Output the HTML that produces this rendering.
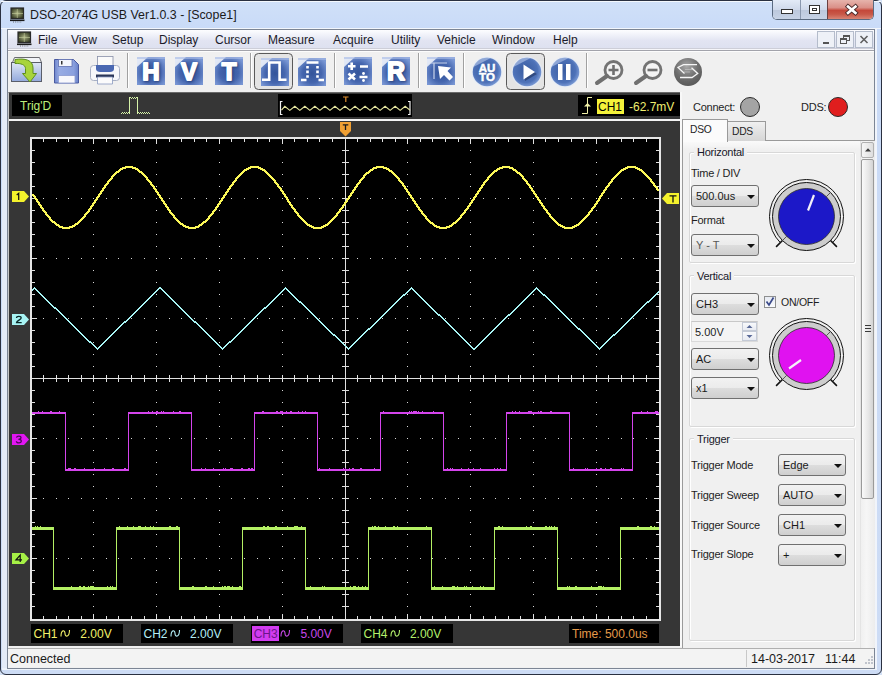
<!DOCTYPE html>
<html><head><meta charset="utf-8">
<style>
*{box-sizing:border-box;margin:0;padding:0}
html,body{width:882px;height:675px;overflow:hidden;background:#d4e1f5;font-family:"Liberation Sans",sans-serif;font-size:12px;color:#1e1e1e}
.a{position:absolute}
.t{position:absolute;white-space:pre;line-height:1}
.menu .t{top:34px;font-size:12px;color:#1b1b2a}
.ico{position:absolute;border-radius:2px;background:linear-gradient(135deg,#9fb4de 0%,#5b7dc0 35%,#3f63a8 70%,#2d4f92 100%);box-shadow:inset 0 0 3px rgba(255,255,255,.5)}
.ico b{position:absolute;left:0;right:0;text-align:center;color:#fff;font-weight:bold;font-family:"Liberation Sans",sans-serif;text-shadow:1px 1px 1px #1a2e5a}
.sep{position:absolute;top:54px;width:1px;height:34px;background:#a8a8a8;border-right:1px solid #fff}
.combo{position:absolute;height:22px;border:1px solid #707070;border-radius:3px;background:linear-gradient(#f2f2f2,#ebebeb 50%,#dddddd 51%,#cfcfcf);font-size:11px;color:#1a1a1a}
.combo span{position:absolute;left:4px;top:5px;white-space:pre;line-height:1}
.combo i{position:absolute;right:3px;top:9px;width:0;height:0;border-left:4px solid transparent;border-right:4px solid transparent;border-top:4.5px solid #111}
.lbl{position:absolute;white-space:pre;line-height:1;font-size:11px;color:#1e1e1e;letter-spacing:-0.25px}
.grp{position:absolute;border:1px solid #d8d8d8;border-radius:2px;box-shadow:1px 1px 0 #fff inset,1px 1px 0 #fff}
.chbox{position:absolute;top:624px;height:19px;background:#000;font-size:12px}
.chbox span{position:absolute;top:4px;white-space:pre;line-height:1}
</style></head><body>
<!-- outer window frame -->
<div class="a" style="left:0;top:0;width:882px;height:675px;border:1px solid #2a3040;border-radius:6px;background:linear-gradient(#d0e0f8,#c9dbf8 27px,#c9daf6 29px,#cddcf5)"></div><div class="a" style="left:2px;top:29px;width:5px;height:640px;background:#e4ebf7"></div><div class="a" style="left:875px;top:29px;width:2px;height:641px;background:#f0f4fb"></div><div class="a" style="left:2px;top:668px;width:875px;height:2px;background:#eef3fa"></div><div class="a" style="left:1px;top:28px;width:880px;height:1px;background:#f2f6fc"></div>
<div class="a" style="left:1px;top:1px;width:880px;height:1px;background:#f4f8fd"></div>
<!-- title -->
<svg class="a" style="left:10px;top:7px" width="16" height="16"><defs><radialGradient id="scr10" cx="0.5" cy="0.5" r="0.6"><stop offset="0" stop-color="#a8ae80"/><stop offset="1" stop-color="#30361e"/></radialGradient></defs><rect x="1" y="1" width="12.5" height="10.5" fill="url(#scr10)" stroke="#2a2a2a" stroke-width="1.2"/><path d="M7.3 2V11M2 6.5H13" stroke="#c8d0a0" stroke-width="0.8" opacity="0.7"/><rect x="0" y="12.5" width="14.5" height="1.6" fill="#1a1a1a"/><path d="M3 15H12" stroke="#555" stroke-width="0.8" stroke-dasharray="1 1.2"/></svg>
<div class="t" style="left:30px;top:9px;font-size:12.4px;color:#1a1a1a">DSO-2074G USB Ver1.0.3 - [Scope1]</div>
<!-- caption buttons -->
<div class="a" style="left:772px;top:0;width:102px;height:20px;border:1px solid #5a6a80;border-top:none;border-radius:0 0 5px 5px;overflow:hidden;background:#fff">
  <div class="a" style="left:0;top:0;width:27px;height:19px;background:linear-gradient(#e3ebf7,#cfd9ea 50%,#bcc8dc 51%,#c7d3e6)"></div>
  <div class="a" style="left:27px;top:0;width:1px;height:19px;background:#8a98ae"></div>
  <div class="a" style="left:28px;top:0;width:26px;height:19px;background:linear-gradient(#e3ebf7,#cfd9ea 50%,#bcc8dc 51%,#c7d3e6)"></div>
  <div class="a" style="left:54px;top:0;width:1px;height:19px;background:#6a4040"></div>
  <div class="a" style="left:55px;top:0;width:47px;height:19px;background:linear-gradient(#e6b4ac,#da9088 40%,#c4483a 55%,#c85848 75%,#d88474)"></div>
  <div class="a" style="left:8px;top:9px;width:12px;height:5px;border:1px solid #333;background:#fff"></div>
  <div class="a" style="left:36px;top:5px;width:11px;height:9px;border:1px solid #333;background:#fff"><div class="a" style="left:2px;top:2px;width:5px;height:3px;border:1px solid #333"></div></div>
  <svg class="a" style="left:70px;top:2px" width="18" height="16"><path d="M5 4.5L12.5 11M12.5 4.5L5 11" stroke="#4a2a2a" stroke-width="4.4" stroke-linecap="square"/><path d="M5 4.5L12.5 11M12.5 4.5L5 11" stroke="#fff" stroke-width="2.6" stroke-linecap="square"/></svg>
</div>
<!-- MDI child frame -->
<div class="a" style="left:7px;top:29px;width:868px;height:640px;background:#f0f0f0;border:1px solid #7c8594"></div>
<!-- menu bar -->
<div class="a" style="left:8px;top:48px;width:866px;height:4px;background:linear-gradient(#cdced8 0 1px,#f6f6fa 1px 2px,#a2a3ab 2px 3px,#fcfcfc 3px 4px)"></div><div class="a menu" style="left:8px;top:30px;width:866px;height:18px;background:linear-gradient(#fdfdff,#f4f5fb 20%,#e2e4f2 60%,#dee1f0)">
</div>
<div class="menu">
<svg class="a" style="left:17px;top:31px" width="16" height="16"><defs><radialGradient id="scr17" cx="0.5" cy="0.5" r="0.6"><stop offset="0" stop-color="#a8ae80"/><stop offset="1" stop-color="#30361e"/></radialGradient></defs><rect x="1" y="1" width="12.5" height="10.5" fill="url(#scr17)" stroke="#2a2a2a" stroke-width="1.2"/><path d="M7.3 2V11M2 6.5H13" stroke="#c8d0a0" stroke-width="0.8" opacity="0.7"/><rect x="0" y="12.5" width="14.5" height="1.6" fill="#1a1a1a"/><path d="M3 15H12" stroke="#555" stroke-width="0.8" stroke-dasharray="1 1.2"/></svg>
<div class="t" style="left:38px">File</div>
<div class="t" style="left:71px">View</div>
<div class="t" style="left:112px">Setup</div>
<div class="t" style="left:159px">Display</div>
<div class="t" style="left:215px">Cursor</div>
<div class="t" style="left:268px">Measure</div>
<div class="t" style="left:333px">Acquire</div>
<div class="t" style="left:391px">Utility</div>
<div class="t" style="left:437px">Vehicle</div>
<div class="t" style="left:492px">Window</div>
<div class="t" style="left:553px">Help</div>
</div>
<!-- MDI buttons -->
<div class="a" style="left:817px;top:31px;width:18px;height:17px;border:1px solid #b4bccb;background:#eef1f7"><div class="a" style="left:5px;top:10px;width:6px;height:2px;background:#555"></div></div>
<div class="a" style="left:836px;top:31px;width:18px;height:17px;border:1px solid #b4bccb;background:#eef1f7"><div class="a" style="left:6px;top:3px;width:7px;height:6px;border:1px solid #555;border-top-width:2px"></div><div class="a" style="left:3px;top:6px;width:7px;height:6px;border:1px solid #555;border-top-width:2px;background:#eef1f7"></div></div>
<div class="a" style="left:855px;top:31px;width:18px;height:17px;border:1px solid #b4bccb;background:#eef1f7"><svg class="a" style="left:0;top:0" width="16" height="15"><path d="M4.5 4L11.5 11M11.5 4L4.5 11" stroke="#606060" stroke-width="1.6"/></svg></div>
<!-- toolbar -->
<div class="a" style="left:8px;top:52px;width:866px;height:40px;background:#f0f0f0"></div>
<!-- toolbar icons -->
<svg class="a" style="left:0;top:50px" width="720" height="42">
<defs>
<radialGradient id="bg1" cx="0.5" cy="0.55" r="0.62"><stop offset="0" stop-color="#34559a"/><stop offset="0.55" stop-color="#4566ae"/><stop offset="1" stop-color="#7896d4"/></radialGradient><filter id="soft" x="-10%" y="-10%" width="120%" height="120%"><feGaussianBlur stdDeviation="0.55"/></filter>
<radialGradient id="rg1" cx="0.45" cy="0.45" r="0.6"><stop offset="0" stop-color="#3a5ca0"/><stop offset="0.7" stop-color="#4e72b8"/><stop offset="1" stop-color="#86a4dc"/></radialGradient>
<linearGradient id="fold" x1="0" y1="0" x2="0" y2="1"><stop offset="0" stop-color="#dfe7f6"/><stop offset="1" stop-color="#93a9dc"/></linearGradient>
<filter id="blr" x="-20%" y="-20%" width="140%" height="140%"><feGaussianBlur stdDeviation="0.8"/></filter>
</defs>
<!-- folder -->
<path d="M12.5 12.5L14.5 7.5H39.5L41.5 12.5" fill="#f2f4f8" stroke="#6a6a70" stroke-width="1"/>
<rect x="11.5" y="12.5" width="30" height="19" fill="url(#fold)" stroke="#5a5e6a" stroke-width="1"/>
<path d="M15 9.5C25 8 33 10 33 18V23.5H36.5L30 32L22.5 23.5H25.5V18.5C25.5 15 21 13 15 13.5Z" fill="#a8d43c" stroke="#5f8f1e" stroke-width="1"/>
<!-- floppy -->
<linearGradient id="flp" x1="0" y1="0" x2="1" y2="0"><stop offset="0" stop-color="#6f86cc"/><stop offset="0.2" stop-color="#98ace4"/><stop offset="0.8" stop-color="#8aa0de"/><stop offset="1" stop-color="#6a82c8"/></linearGradient><path d="M54.5 9.5H73.5L78.5 14.5V33H54.5Z" fill="url(#flp)" stroke="#4a5aa0" stroke-width="1"/>
<rect x="58.5" y="9.5" width="13.5" height="7" fill="#f4f6fc" stroke="#6070b0" stroke-width="0.8"/>
<rect x="61" y="11" width="1.5" height="3.5" fill="#333"/>
<rect x="58.5" y="25.5" width="16.5" height="7.5" fill="#f8f8fc" stroke="#8a9ad0" stroke-width="0.8"/>
<!-- printer -->
<rect x="97.5" y="6.5" width="15.5" height="9" fill="#fafafa" stroke="#8890a8" stroke-width="0.8"/>
<rect x="90.5" y="15.5" width="29" height="15" rx="3" fill="#f6f7fa" stroke="#a8b0c4" stroke-width="1"/>
<path d="M96 15H114V19C114 21 112 22 110 22H100C98 22 96 21 96 19Z" fill="#4a68b2"/>
<rect x="96" y="24.5" width="18" height="3" fill="#2a3658"/>
<path d="M97.5 27H112.5V34H97.5Z" fill="#fbfbfc" stroke="#8a9ac0" stroke-width="0.8"/>
<g filter="url(#soft)"><rect x="137" y="7" width="28" height="28" fill="url(#bg1)"/><path d="M137 7H148L137 17Z" fill="#f4f7fc" opacity="0.85"/><rect x="137" y="7" width="28" height="2" fill="#aabde6" opacity="0.6"/></g><text x="152" y="31" font-family="Liberation Sans" font-weight="bold" font-size="24" text-anchor="middle" fill="#1a2c5a" stroke="#1a2c5a" stroke-width="1.8" opacity="0.6" filter="url(#blr)">H</text><text x="151" y="30" font-family="Liberation Sans" font-weight="bold" font-size="24" text-anchor="middle" fill="#fff" stroke="#fff" stroke-width="1.8" stroke-linejoin="round">H</text><g filter="url(#soft)"><rect x="175" y="7" width="28" height="28" fill="url(#bg1)"/><path d="M175 7H186L175 17Z" fill="#f4f7fc" opacity="0.85"/><rect x="175" y="7" width="28" height="2" fill="#aabde6" opacity="0.6"/></g><text x="190" y="31" font-family="Liberation Sans" font-weight="bold" font-size="24" text-anchor="middle" fill="#1a2c5a" stroke="#1a2c5a" stroke-width="1.8" opacity="0.6" filter="url(#blr)">V</text><text x="189" y="30" font-family="Liberation Sans" font-weight="bold" font-size="24" text-anchor="middle" fill="#fff" stroke="#fff" stroke-width="1.8" stroke-linejoin="round">V</text><g filter="url(#soft)"><rect x="215" y="7" width="28" height="28" fill="url(#bg1)"/><path d="M215 7H226L215 17Z" fill="#f4f7fc" opacity="0.85"/><rect x="215" y="7" width="28" height="2" fill="#aabde6" opacity="0.6"/></g><text x="230" y="31" font-family="Liberation Sans" font-weight="bold" font-size="24" text-anchor="middle" fill="#1a2c5a" stroke="#1a2c5a" stroke-width="1.8" opacity="0.6" filter="url(#blr)">T</text><text x="229" y="30" font-family="Liberation Sans" font-weight="bold" font-size="24" text-anchor="middle" fill="#fff" stroke="#fff" stroke-width="1.8" stroke-linejoin="round">T</text><g filter="url(#soft)"><rect x="382" y="7" width="28" height="28" fill="url(#bg1)"/><path d="M382 7H393L382 17Z" fill="#f4f7fc" opacity="0.85"/><rect x="382" y="7" width="28" height="2" fill="#aabde6" opacity="0.6"/></g><text x="397" y="31" font-family="Liberation Sans" font-weight="bold" font-size="25" text-anchor="middle" fill="#1a2c5a" stroke="#1a2c5a" stroke-width="1.8" opacity="0.6" filter="url(#blr)">R</text><text x="396" y="30" font-family="Liberation Sans" font-weight="bold" font-size="25" text-anchor="middle" fill="#fff" stroke="#fff" stroke-width="1.8" stroke-linejoin="round">R</text><!-- pressed frame 1 -->
<rect x="254.5" y="3.5" width="38" height="36" rx="4" fill="#e4e4e4" stroke="#5a5a5a" stroke-width="1"/>
<g filter="url(#soft)"><rect x="261" y="8" width="28" height="28" fill="url(#bg1)"/><path d="M261 8H272L261 18Z" fill="#f4f7fc" opacity="0.85"/><rect x="261" y="8" width="28" height="2" fill="#aabde6" opacity="0.6"/></g><path d="M262 29.8H269.2V12.5H279.6V29.8H286.5" stroke="#fff" stroke-width="2.6" fill="none"/><g filter="url(#soft)"><rect x="298" y="8" width="28" height="28" fill="url(#bg1)"/><path d="M298 8H309L298 18Z" fill="#f4f7fc" opacity="0.85"/><rect x="298" y="8" width="28" height="2" fill="#aabde6" opacity="0.6"/></g><path d="M301 30H306.5M318.5 30H324M306.5 12.5H318.5" stroke="#fff" stroke-width="2.6" fill="none"/><path d="M307.5 16V29M317.5 16V29" stroke="#fff" stroke-width="2.6" stroke-dasharray="2.6 2" fill="none"/><g filter="url(#soft)"><rect x="344" y="7" width="28" height="28" fill="url(#bg1)"/><path d="M344 7H355L344 17Z" fill="#f4f7fc" opacity="0.85"/><rect x="344" y="7" width="28" height="2" fill="#aabde6" opacity="0.6"/></g><path d="M348 16.3H355.5M351.7 12.5V20M360 16.5H368M348.5 23.5L355 29.5M355 23.5L348.5 29.5M359.5 27H367.5" stroke="#fff" stroke-width="2.6" fill="none"/><circle cx="363.5" cy="23.5" r="1.4" fill="#fff"/><circle cx="363.5" cy="30.5" r="1.4" fill="#fff"/><g filter="url(#soft)"><rect x="427" y="7" width="28" height="28" fill="url(#bg1)"/><path d="M427 7H438L427 17Z" fill="#f4f7fc" opacity="0.85"/><rect x="427" y="7" width="28" height="2" fill="#aabde6" opacity="0.6"/></g><path d="M431 13H447M434 13V29" stroke="#c8d4ec" stroke-width="1.2" fill="none"/><path d="M438 16L451 17.5L447.5 21L453 27L449.5 30.5L444 25L440 29Z" fill="#fff"/><rect x="127" y="3" width="1" height="35" fill="#a0a0a0"/><rect x="128" y="3" width="1" height="35" fill="#fff"/><rect x="250" y="3" width="1" height="35" fill="#a0a0a0"/><rect x="251" y="3" width="1" height="35" fill="#fff"/><rect x="334" y="3" width="1" height="35" fill="#a0a0a0"/><rect x="335" y="3" width="1" height="35" fill="#fff"/><rect x="418" y="3" width="1" height="35" fill="#a0a0a0"/><rect x="419" y="3" width="1" height="35" fill="#fff"/><rect x="463" y="3" width="1" height="35" fill="#a0a0a0"/><rect x="464" y="3" width="1" height="35" fill="#fff"/><rect x="586" y="3" width="1" height="35" fill="#a0a0a0"/><rect x="587" y="3" width="1" height="35" fill="#fff"/><rect x="506.5" y="3.5" width="38" height="36" rx="4" fill="#e4e4e4" stroke="#5a5a5a" stroke-width="1"/><circle cx="487" cy="22" r="15.5" fill="#e4ecf8" opacity="0.7" filter="url(#soft)"/><circle cx="487" cy="22" r="14.3" fill="url(#rg1)"/><path d="M473.37 17.04A14.5 14.5 0 0 1 490.75 7.99Z" fill="#c4d4f0" opacity="0.55"/><circle cx="527" cy="22" r="15.5" fill="#e4ecf8" opacity="0.7" filter="url(#soft)"/><circle cx="527" cy="22" r="14.3" fill="url(#rg1)"/><path d="M513.37 17.04A14.5 14.5 0 0 1 530.75 7.99Z" fill="#c4d4f0" opacity="0.55"/><circle cx="565" cy="22" r="15.5" fill="#e4ecf8" opacity="0.7" filter="url(#soft)"/><circle cx="565" cy="22" r="14.3" fill="url(#rg1)"/><path d="M551.37 17.04A14.5 14.5 0 0 1 568.75 7.99Z" fill="#c4d4f0" opacity="0.55"/><text x="487" y="21.5" font-family="Liberation Sans" font-weight="bold" font-size="11.5" text-anchor="middle" fill="#fff" stroke="#fff" stroke-width="0.5">AU</text><text x="487" y="31" font-family="Liberation Sans" font-weight="bold" font-size="11.5" text-anchor="middle" fill="#fff" stroke="#fff" stroke-width="0.5">TO</text><path d="M525 16.5L537 24L525 31Z" fill="#1a2a50" opacity="0.5" filter="url(#soft)"/><path d="M523.5 14.5L535 22L523.5 29.5Z" fill="#fff"/><rect x="558" y="14" width="4.5" height="16" fill="#fff"/><rect x="566" y="14" width="4.5" height="16" fill="#fff"/><circle cx="613.5" cy="20" r="8.5" stroke="#747474" stroke-width="2.8" fill="#f4f4f4"/>
<path d="M607 26L597 33" stroke="#707070" stroke-width="4" stroke-linecap="round"/>
<path d="M613.5 15V25M608.5 20H618.5" stroke="#707070" stroke-width="2.6"/>
<circle cx="652.5" cy="20" r="8.5" stroke="#747474" stroke-width="2.8" fill="#f4f4f4"/>
<path d="M646 26L636 33" stroke="#707070" stroke-width="4" stroke-linecap="round"/>
<path d="M647.5 20H657.5" stroke="#707070" stroke-width="2.6"/>
<defs><radialGradient id="gr2" cx="0.45" cy="0.3" r="0.75"><stop offset="0" stop-color="#a8a8a8"/><stop offset="0.55" stop-color="#6e6e6e"/><stop offset="1" stop-color="#555"/></radialGradient></defs>
<circle cx="688" cy="22" r="14" fill="url(#gr2)" filter="url(#soft)"/>
<path d="M697 14.7H683.5L678 17.5L684.5 23.5M680 27.5H692L697.7 23.5L691.5 17.8" stroke="#f6f6f6" stroke-width="1.3" fill="none"/><path d="M685 19.5H693M684 22H690" stroke="#dcdcdc" stroke-width="0.8" fill="none" opacity="0.6"/>
</svg>
<!-- scope surround -->
<div class="a" style="left:8px;top:92px;width:673px;height:554px;background:#363636;border-left:1px solid #c4c4c4;border-top:1px solid #6a6a6a"></div>
<div class="a" style="left:9px;top:119px;width:672px;height:2px;background:#f4f4f4"></div>
<!-- trig bar -->
<div class="a" style="left:12px;top:95px;width:50px;height:21px;background:#000"></div>
<div class="t" style="left:20px;top:100px;color:#bef07c">Trig'D</div>
<svg class="a" style="left:0;top:0" width="200" height="130"><path d="M121 113h1v1h-1zM122 112h1v1h-1zM123 113h1v1h-1zM124 112h1v1h-1zM125 113h1v1h-1zM126 112h1v1h-1zM127 113h1v1h-1zM128 112h1v1h-1zM130 97h1v1h-1zM131 98h1v1h-1zM132 97h1v1h-1zM133 98h1v1h-1zM134 97h1v1h-1zM135 98h1v1h-1zM136 97h1v1h-1zM138 112h1v1h-1zM139 113h1v1h-1zM140 112h1v1h-1zM141 113h1v1h-1zM142 112h1v1h-1zM143 113h1v1h-1zM144 112h1v1h-1zM145 113h1v1h-1zM146 112h1v1h-1zM147 113h1v1h-1zM148 112h1v1h-1zM149 113h1v1h-1zM129 97h1v17h-1zM137 97h1v17h-1z" fill="#d6f2a8"/></svg>
<div class="a" style="left:278px;top:94px;width:134px;height:23px;background:#000"></div>
<svg class="a" style="left:0;top:0" width="882" height="130"><path d="M282.5 101.5H280.5V114.5H282.5M408 101.5H410V114.5H408" stroke="#f0f0f0" stroke-width="1.2" fill="none"/><path d="M281.5 110.2L284.80 106.3L289.81 110.4L294.83 106.3L299.84 110.4L304.86 106.3L309.88 110.4L314.89 106.3L319.90 110.4L324.92 106.3L329.94 110.4L334.95 106.3L339.96 110.4L344.98 106.3L350.00 110.4L355.01 106.3L360.02 110.4L365.04 106.3L370.06 110.4L375.07 106.3L380.08 110.4L385.10 106.3L390.12 110.4L395.13 106.3L400.14 110.4L405.16 106.3L410.17 110.4" stroke="#e6e6a0" stroke-width="1.1" fill="none"/><path d="M343 97H348.5M345.8 97V102" stroke="#e09030" stroke-width="1.2"/></svg>
<div class="a" style="left:578px;top:95px;width:102px;height:21px;background:#000"></div>
<svg class="a" style="left:0;top:0" width="700" height="130"><path d="M582 113.5H587.5V97.5H592" stroke="#f2f2a8" stroke-width="1" fill="none"/><path d="M587.5 103L584 106.5H591Z" fill="#f2f2a8"/></svg>
<div class="a" style="left:597px;top:99px;width:27px;height:15px;background:#f4f23a"></div>
<div class="t" style="left:598px;top:101px;color:#000">CH1</div>
<div class="t" style="left:629px;top:101px;color:#f0ee70">-62.7mV</div>
<svg width="882" height="675" style="position:absolute;left:0;top:0"><rect x="30" y="137" width="631" height="484" fill="#e6e6e6"/><rect x="32" y="139" width="627" height="480" fill="#000"/><path d="M93 150h1v1h-1zM93 162h1v1h-1zM93 174h1v1h-1zM93 186h1v1h-1zM93 198h1v1h-1zM93 210h1v1h-1zM93 222h1v1h-1zM93 234h1v1h-1zM93 246h1v1h-1zM93 258h1v1h-1zM93 270h1v1h-1zM93 282h1v1h-1zM93 294h1v1h-1zM93 306h1v1h-1zM93 318h1v1h-1zM93 330h1v1h-1zM93 342h1v1h-1zM93 354h1v1h-1zM93 366h1v1h-1zM93 390h1v1h-1zM93 402h1v1h-1zM93 414h1v1h-1zM93 426h1v1h-1zM93 438h1v1h-1zM93 450h1v1h-1zM93 462h1v1h-1zM93 474h1v1h-1zM93 486h1v1h-1zM93 498h1v1h-1zM93 510h1v1h-1zM93 522h1v1h-1zM93 534h1v1h-1zM93 546h1v1h-1zM93 558h1v1h-1zM93 570h1v1h-1zM93 582h1v1h-1zM93 594h1v1h-1zM93 606h1v1h-1zM156 150h1v1h-1zM156 162h1v1h-1zM156 174h1v1h-1zM156 186h1v1h-1zM156 198h1v1h-1zM156 210h1v1h-1zM156 222h1v1h-1zM156 234h1v1h-1zM156 246h1v1h-1zM156 258h1v1h-1zM156 270h1v1h-1zM156 282h1v1h-1zM156 294h1v1h-1zM156 306h1v1h-1zM156 318h1v1h-1zM156 330h1v1h-1zM156 342h1v1h-1zM156 354h1v1h-1zM156 366h1v1h-1zM156 390h1v1h-1zM156 402h1v1h-1zM156 414h1v1h-1zM156 426h1v1h-1zM156 438h1v1h-1zM156 450h1v1h-1zM156 462h1v1h-1zM156 474h1v1h-1zM156 486h1v1h-1zM156 498h1v1h-1zM156 510h1v1h-1zM156 522h1v1h-1zM156 534h1v1h-1zM156 546h1v1h-1zM156 558h1v1h-1zM156 570h1v1h-1zM156 582h1v1h-1zM156 594h1v1h-1zM156 606h1v1h-1zM219 150h1v1h-1zM219 162h1v1h-1zM219 174h1v1h-1zM219 186h1v1h-1zM219 198h1v1h-1zM219 210h1v1h-1zM219 222h1v1h-1zM219 234h1v1h-1zM219 246h1v1h-1zM219 258h1v1h-1zM219 270h1v1h-1zM219 282h1v1h-1zM219 294h1v1h-1zM219 306h1v1h-1zM219 318h1v1h-1zM219 330h1v1h-1zM219 342h1v1h-1zM219 354h1v1h-1zM219 366h1v1h-1zM219 390h1v1h-1zM219 402h1v1h-1zM219 414h1v1h-1zM219 426h1v1h-1zM219 438h1v1h-1zM219 450h1v1h-1zM219 462h1v1h-1zM219 474h1v1h-1zM219 486h1v1h-1zM219 498h1v1h-1zM219 510h1v1h-1zM219 522h1v1h-1zM219 534h1v1h-1zM219 546h1v1h-1zM219 558h1v1h-1zM219 570h1v1h-1zM219 582h1v1h-1zM219 594h1v1h-1zM219 606h1v1h-1zM282 150h1v1h-1zM282 162h1v1h-1zM282 174h1v1h-1zM282 186h1v1h-1zM282 198h1v1h-1zM282 210h1v1h-1zM282 222h1v1h-1zM282 234h1v1h-1zM282 246h1v1h-1zM282 258h1v1h-1zM282 270h1v1h-1zM282 282h1v1h-1zM282 294h1v1h-1zM282 306h1v1h-1zM282 318h1v1h-1zM282 330h1v1h-1zM282 342h1v1h-1zM282 354h1v1h-1zM282 366h1v1h-1zM282 390h1v1h-1zM282 402h1v1h-1zM282 414h1v1h-1zM282 426h1v1h-1zM282 438h1v1h-1zM282 450h1v1h-1zM282 462h1v1h-1zM282 474h1v1h-1zM282 486h1v1h-1zM282 498h1v1h-1zM282 510h1v1h-1zM282 522h1v1h-1zM282 534h1v1h-1zM282 546h1v1h-1zM282 558h1v1h-1zM282 570h1v1h-1zM282 582h1v1h-1zM282 594h1v1h-1zM282 606h1v1h-1zM407 150h1v1h-1zM407 162h1v1h-1zM407 174h1v1h-1zM407 186h1v1h-1zM407 198h1v1h-1zM407 210h1v1h-1zM407 222h1v1h-1zM407 234h1v1h-1zM407 246h1v1h-1zM407 258h1v1h-1zM407 270h1v1h-1zM407 282h1v1h-1zM407 294h1v1h-1zM407 306h1v1h-1zM407 318h1v1h-1zM407 330h1v1h-1zM407 342h1v1h-1zM407 354h1v1h-1zM407 366h1v1h-1zM407 390h1v1h-1zM407 402h1v1h-1zM407 414h1v1h-1zM407 426h1v1h-1zM407 438h1v1h-1zM407 450h1v1h-1zM407 462h1v1h-1zM407 474h1v1h-1zM407 486h1v1h-1zM407 498h1v1h-1zM407 510h1v1h-1zM407 522h1v1h-1zM407 534h1v1h-1zM407 546h1v1h-1zM407 558h1v1h-1zM407 570h1v1h-1zM407 582h1v1h-1zM407 594h1v1h-1zM407 606h1v1h-1zM470 150h1v1h-1zM470 162h1v1h-1zM470 174h1v1h-1zM470 186h1v1h-1zM470 198h1v1h-1zM470 210h1v1h-1zM470 222h1v1h-1zM470 234h1v1h-1zM470 246h1v1h-1zM470 258h1v1h-1zM470 270h1v1h-1zM470 282h1v1h-1zM470 294h1v1h-1zM470 306h1v1h-1zM470 318h1v1h-1zM470 330h1v1h-1zM470 342h1v1h-1zM470 354h1v1h-1zM470 366h1v1h-1zM470 390h1v1h-1zM470 402h1v1h-1zM470 414h1v1h-1zM470 426h1v1h-1zM470 438h1v1h-1zM470 450h1v1h-1zM470 462h1v1h-1zM470 474h1v1h-1zM470 486h1v1h-1zM470 498h1v1h-1zM470 510h1v1h-1zM470 522h1v1h-1zM470 534h1v1h-1zM470 546h1v1h-1zM470 558h1v1h-1zM470 570h1v1h-1zM470 582h1v1h-1zM470 594h1v1h-1zM470 606h1v1h-1zM533 150h1v1h-1zM533 162h1v1h-1zM533 174h1v1h-1zM533 186h1v1h-1zM533 198h1v1h-1zM533 210h1v1h-1zM533 222h1v1h-1zM533 234h1v1h-1zM533 246h1v1h-1zM533 258h1v1h-1zM533 270h1v1h-1zM533 282h1v1h-1zM533 294h1v1h-1zM533 306h1v1h-1zM533 318h1v1h-1zM533 330h1v1h-1zM533 342h1v1h-1zM533 354h1v1h-1zM533 366h1v1h-1zM533 390h1v1h-1zM533 402h1v1h-1zM533 414h1v1h-1zM533 426h1v1h-1zM533 438h1v1h-1zM533 450h1v1h-1zM533 462h1v1h-1zM533 474h1v1h-1zM533 486h1v1h-1zM533 498h1v1h-1zM533 510h1v1h-1zM533 522h1v1h-1zM533 534h1v1h-1zM533 546h1v1h-1zM533 558h1v1h-1zM533 570h1v1h-1zM533 582h1v1h-1zM533 594h1v1h-1zM533 606h1v1h-1zM596 150h1v1h-1zM596 162h1v1h-1zM596 174h1v1h-1zM596 186h1v1h-1zM596 198h1v1h-1zM596 210h1v1h-1zM596 222h1v1h-1zM596 234h1v1h-1zM596 246h1v1h-1zM596 258h1v1h-1zM596 270h1v1h-1zM596 282h1v1h-1zM596 294h1v1h-1zM596 306h1v1h-1zM596 318h1v1h-1zM596 330h1v1h-1zM596 342h1v1h-1zM596 354h1v1h-1zM596 366h1v1h-1zM596 390h1v1h-1zM596 402h1v1h-1zM596 414h1v1h-1zM596 426h1v1h-1zM596 438h1v1h-1zM596 450h1v1h-1zM596 462h1v1h-1zM596 474h1v1h-1zM596 486h1v1h-1zM596 498h1v1h-1zM596 510h1v1h-1zM596 522h1v1h-1zM596 534h1v1h-1zM596 546h1v1h-1zM596 558h1v1h-1zM596 570h1v1h-1zM596 582h1v1h-1zM596 594h1v1h-1zM596 606h1v1h-1zM43 198h1v1h-1zM56 198h1v1h-1zM68 198h1v1h-1zM81 198h1v1h-1zM93 198h1v1h-1zM106 198h1v1h-1zM118 198h1v1h-1zM131 198h1v1h-1zM144 198h1v1h-1zM156 198h1v1h-1zM169 198h1v1h-1zM181 198h1v1h-1zM194 198h1v1h-1zM206 198h1v1h-1zM219 198h1v1h-1zM231 198h1v1h-1zM244 198h1v1h-1zM257 198h1v1h-1zM269 198h1v1h-1zM282 198h1v1h-1zM294 198h1v1h-1zM307 198h1v1h-1zM319 198h1v1h-1zM332 198h1v1h-1zM357 198h1v1h-1zM370 198h1v1h-1zM382 198h1v1h-1zM395 198h1v1h-1zM407 198h1v1h-1zM420 198h1v1h-1zM432 198h1v1h-1zM445 198h1v1h-1zM458 198h1v1h-1zM470 198h1v1h-1zM483 198h1v1h-1zM495 198h1v1h-1zM508 198h1v1h-1zM520 198h1v1h-1zM533 198h1v1h-1zM545 198h1v1h-1zM558 198h1v1h-1zM571 198h1v1h-1zM583 198h1v1h-1zM596 198h1v1h-1zM608 198h1v1h-1zM621 198h1v1h-1zM633 198h1v1h-1zM646 198h1v1h-1zM43 258h1v1h-1zM56 258h1v1h-1zM68 258h1v1h-1zM81 258h1v1h-1zM93 258h1v1h-1zM106 258h1v1h-1zM118 258h1v1h-1zM131 258h1v1h-1zM144 258h1v1h-1zM156 258h1v1h-1zM169 258h1v1h-1zM181 258h1v1h-1zM194 258h1v1h-1zM206 258h1v1h-1zM219 258h1v1h-1zM231 258h1v1h-1zM244 258h1v1h-1zM257 258h1v1h-1zM269 258h1v1h-1zM282 258h1v1h-1zM294 258h1v1h-1zM307 258h1v1h-1zM319 258h1v1h-1zM332 258h1v1h-1zM357 258h1v1h-1zM370 258h1v1h-1zM382 258h1v1h-1zM395 258h1v1h-1zM407 258h1v1h-1zM420 258h1v1h-1zM432 258h1v1h-1zM445 258h1v1h-1zM458 258h1v1h-1zM470 258h1v1h-1zM483 258h1v1h-1zM495 258h1v1h-1zM508 258h1v1h-1zM520 258h1v1h-1zM533 258h1v1h-1zM545 258h1v1h-1zM558 258h1v1h-1zM571 258h1v1h-1zM583 258h1v1h-1zM596 258h1v1h-1zM608 258h1v1h-1zM621 258h1v1h-1zM633 258h1v1h-1zM646 258h1v1h-1zM43 318h1v1h-1zM56 318h1v1h-1zM68 318h1v1h-1zM81 318h1v1h-1zM93 318h1v1h-1zM106 318h1v1h-1zM118 318h1v1h-1zM131 318h1v1h-1zM144 318h1v1h-1zM156 318h1v1h-1zM169 318h1v1h-1zM181 318h1v1h-1zM194 318h1v1h-1zM206 318h1v1h-1zM219 318h1v1h-1zM231 318h1v1h-1zM244 318h1v1h-1zM257 318h1v1h-1zM269 318h1v1h-1zM282 318h1v1h-1zM294 318h1v1h-1zM307 318h1v1h-1zM319 318h1v1h-1zM332 318h1v1h-1zM357 318h1v1h-1zM370 318h1v1h-1zM382 318h1v1h-1zM395 318h1v1h-1zM407 318h1v1h-1zM420 318h1v1h-1zM432 318h1v1h-1zM445 318h1v1h-1zM458 318h1v1h-1zM470 318h1v1h-1zM483 318h1v1h-1zM495 318h1v1h-1zM508 318h1v1h-1zM520 318h1v1h-1zM533 318h1v1h-1zM545 318h1v1h-1zM558 318h1v1h-1zM571 318h1v1h-1zM583 318h1v1h-1zM596 318h1v1h-1zM608 318h1v1h-1zM621 318h1v1h-1zM633 318h1v1h-1zM646 318h1v1h-1zM43 438h1v1h-1zM56 438h1v1h-1zM68 438h1v1h-1zM81 438h1v1h-1zM93 438h1v1h-1zM106 438h1v1h-1zM118 438h1v1h-1zM131 438h1v1h-1zM144 438h1v1h-1zM156 438h1v1h-1zM169 438h1v1h-1zM181 438h1v1h-1zM194 438h1v1h-1zM206 438h1v1h-1zM219 438h1v1h-1zM231 438h1v1h-1zM244 438h1v1h-1zM257 438h1v1h-1zM269 438h1v1h-1zM282 438h1v1h-1zM294 438h1v1h-1zM307 438h1v1h-1zM319 438h1v1h-1zM332 438h1v1h-1zM357 438h1v1h-1zM370 438h1v1h-1zM382 438h1v1h-1zM395 438h1v1h-1zM407 438h1v1h-1zM420 438h1v1h-1zM432 438h1v1h-1zM445 438h1v1h-1zM458 438h1v1h-1zM470 438h1v1h-1zM483 438h1v1h-1zM495 438h1v1h-1zM508 438h1v1h-1zM520 438h1v1h-1zM533 438h1v1h-1zM545 438h1v1h-1zM558 438h1v1h-1zM571 438h1v1h-1zM583 438h1v1h-1zM596 438h1v1h-1zM608 438h1v1h-1zM621 438h1v1h-1zM633 438h1v1h-1zM646 438h1v1h-1zM43 498h1v1h-1zM56 498h1v1h-1zM68 498h1v1h-1zM81 498h1v1h-1zM93 498h1v1h-1zM106 498h1v1h-1zM118 498h1v1h-1zM131 498h1v1h-1zM144 498h1v1h-1zM156 498h1v1h-1zM169 498h1v1h-1zM181 498h1v1h-1zM194 498h1v1h-1zM206 498h1v1h-1zM219 498h1v1h-1zM231 498h1v1h-1zM244 498h1v1h-1zM257 498h1v1h-1zM269 498h1v1h-1zM282 498h1v1h-1zM294 498h1v1h-1zM307 498h1v1h-1zM319 498h1v1h-1zM332 498h1v1h-1zM357 498h1v1h-1zM370 498h1v1h-1zM382 498h1v1h-1zM395 498h1v1h-1zM407 498h1v1h-1zM420 498h1v1h-1zM432 498h1v1h-1zM445 498h1v1h-1zM458 498h1v1h-1zM470 498h1v1h-1zM483 498h1v1h-1zM495 498h1v1h-1zM508 498h1v1h-1zM520 498h1v1h-1zM533 498h1v1h-1zM545 498h1v1h-1zM558 498h1v1h-1zM571 498h1v1h-1zM583 498h1v1h-1zM596 498h1v1h-1zM608 498h1v1h-1zM621 498h1v1h-1zM633 498h1v1h-1zM646 498h1v1h-1zM43 558h1v1h-1zM56 558h1v1h-1zM68 558h1v1h-1zM81 558h1v1h-1zM93 558h1v1h-1zM106 558h1v1h-1zM118 558h1v1h-1zM131 558h1v1h-1zM144 558h1v1h-1zM156 558h1v1h-1zM169 558h1v1h-1zM181 558h1v1h-1zM194 558h1v1h-1zM206 558h1v1h-1zM219 558h1v1h-1zM231 558h1v1h-1zM244 558h1v1h-1zM257 558h1v1h-1zM269 558h1v1h-1zM282 558h1v1h-1zM294 558h1v1h-1zM307 558h1v1h-1zM319 558h1v1h-1zM332 558h1v1h-1zM357 558h1v1h-1zM370 558h1v1h-1zM382 558h1v1h-1zM395 558h1v1h-1zM407 558h1v1h-1zM420 558h1v1h-1zM432 558h1v1h-1zM445 558h1v1h-1zM458 558h1v1h-1zM470 558h1v1h-1zM483 558h1v1h-1zM495 558h1v1h-1zM508 558h1v1h-1zM520 558h1v1h-1zM533 558h1v1h-1zM545 558h1v1h-1zM558 558h1v1h-1zM571 558h1v1h-1zM583 558h1v1h-1zM596 558h1v1h-1zM608 558h1v1h-1zM621 558h1v1h-1zM633 558h1v1h-1zM646 558h1v1h-1z" fill="#d8d8d8"/><path d="M43 139h1v3h-1zM43 616h1v3h-1zM43 375h1v7h-1zM56 139h1v3h-1zM56 616h1v3h-1zM56 375h1v7h-1zM68 139h1v3h-1zM68 616h1v3h-1zM68 375h1v7h-1zM81 139h1v3h-1zM81 616h1v3h-1zM81 375h1v7h-1zM93 139h1v5h-1zM93 614h1v5h-1zM93 375h1v7h-1zM106 139h1v3h-1zM106 616h1v3h-1zM106 375h1v7h-1zM118 139h1v3h-1zM118 616h1v3h-1zM118 375h1v7h-1zM131 139h1v3h-1zM131 616h1v3h-1zM131 375h1v7h-1zM144 139h1v3h-1zM144 616h1v3h-1zM144 375h1v7h-1zM156 139h1v5h-1zM156 614h1v5h-1zM156 375h1v7h-1zM169 139h1v3h-1zM169 616h1v3h-1zM169 375h1v7h-1zM181 139h1v3h-1zM181 616h1v3h-1zM181 375h1v7h-1zM194 139h1v3h-1zM194 616h1v3h-1zM194 375h1v7h-1zM206 139h1v3h-1zM206 616h1v3h-1zM206 375h1v7h-1zM219 139h1v5h-1zM219 614h1v5h-1zM219 375h1v7h-1zM231 139h1v3h-1zM231 616h1v3h-1zM231 375h1v7h-1zM244 139h1v3h-1zM244 616h1v3h-1zM244 375h1v7h-1zM257 139h1v3h-1zM257 616h1v3h-1zM257 375h1v7h-1zM269 139h1v3h-1zM269 616h1v3h-1zM269 375h1v7h-1zM282 139h1v5h-1zM282 614h1v5h-1zM282 375h1v7h-1zM294 139h1v3h-1zM294 616h1v3h-1zM294 375h1v7h-1zM307 139h1v3h-1zM307 616h1v3h-1zM307 375h1v7h-1zM319 139h1v3h-1zM319 616h1v3h-1zM319 375h1v7h-1zM332 139h1v3h-1zM332 616h1v3h-1zM332 375h1v7h-1zM345 139h1v5h-1zM345 614h1v5h-1zM345 375h1v7h-1zM357 139h1v3h-1zM357 616h1v3h-1zM357 375h1v7h-1zM370 139h1v3h-1zM370 616h1v3h-1zM370 375h1v7h-1zM382 139h1v3h-1zM382 616h1v3h-1zM382 375h1v7h-1zM395 139h1v3h-1zM395 616h1v3h-1zM395 375h1v7h-1zM407 139h1v5h-1zM407 614h1v5h-1zM407 375h1v7h-1zM420 139h1v3h-1zM420 616h1v3h-1zM420 375h1v7h-1zM432 139h1v3h-1zM432 616h1v3h-1zM432 375h1v7h-1zM445 139h1v3h-1zM445 616h1v3h-1zM445 375h1v7h-1zM458 139h1v3h-1zM458 616h1v3h-1zM458 375h1v7h-1zM470 139h1v5h-1zM470 614h1v5h-1zM470 375h1v7h-1zM483 139h1v3h-1zM483 616h1v3h-1zM483 375h1v7h-1zM495 139h1v3h-1zM495 616h1v3h-1zM495 375h1v7h-1zM508 139h1v3h-1zM508 616h1v3h-1zM508 375h1v7h-1zM520 139h1v3h-1zM520 616h1v3h-1zM520 375h1v7h-1zM533 139h1v5h-1zM533 614h1v5h-1zM533 375h1v7h-1zM545 139h1v3h-1zM545 616h1v3h-1zM545 375h1v7h-1zM558 139h1v3h-1zM558 616h1v3h-1zM558 375h1v7h-1zM571 139h1v3h-1zM571 616h1v3h-1zM571 375h1v7h-1zM583 139h1v3h-1zM583 616h1v3h-1zM583 375h1v7h-1zM596 139h1v5h-1zM596 614h1v5h-1zM596 375h1v7h-1zM608 139h1v3h-1zM608 616h1v3h-1zM608 375h1v7h-1zM621 139h1v3h-1zM621 616h1v3h-1zM621 375h1v7h-1zM633 139h1v3h-1zM633 616h1v3h-1zM633 375h1v7h-1zM646 139h1v3h-1zM646 616h1v3h-1zM646 375h1v7h-1zM32 150h3v1h-3zM656 150h3v1h-3zM342 150h7v1h-7zM32 162h3v1h-3zM656 162h3v1h-3zM342 162h7v1h-7zM32 174h3v1h-3zM656 174h3v1h-3zM342 174h7v1h-7zM32 186h3v1h-3zM656 186h3v1h-3zM342 186h7v1h-7zM32 198h5v1h-5zM654 198h5v1h-5zM342 198h7v1h-7zM32 210h3v1h-3zM656 210h3v1h-3zM342 210h7v1h-7zM32 222h3v1h-3zM656 222h3v1h-3zM342 222h7v1h-7zM32 234h3v1h-3zM656 234h3v1h-3zM342 234h7v1h-7zM32 246h3v1h-3zM656 246h3v1h-3zM342 246h7v1h-7zM32 258h5v1h-5zM654 258h5v1h-5zM342 258h7v1h-7zM32 270h3v1h-3zM656 270h3v1h-3zM342 270h7v1h-7zM32 282h3v1h-3zM656 282h3v1h-3zM342 282h7v1h-7zM32 294h3v1h-3zM656 294h3v1h-3zM342 294h7v1h-7zM32 306h3v1h-3zM656 306h3v1h-3zM342 306h7v1h-7zM32 318h5v1h-5zM654 318h5v1h-5zM342 318h7v1h-7zM32 330h3v1h-3zM656 330h3v1h-3zM342 330h7v1h-7zM32 342h3v1h-3zM656 342h3v1h-3zM342 342h7v1h-7zM32 354h3v1h-3zM656 354h3v1h-3zM342 354h7v1h-7zM32 366h3v1h-3zM656 366h3v1h-3zM342 366h7v1h-7zM32 378h5v1h-5zM654 378h5v1h-5zM342 378h7v1h-7zM32 390h3v1h-3zM656 390h3v1h-3zM342 390h7v1h-7zM32 402h3v1h-3zM656 402h3v1h-3zM342 402h7v1h-7zM32 414h3v1h-3zM656 414h3v1h-3zM342 414h7v1h-7zM32 426h3v1h-3zM656 426h3v1h-3zM342 426h7v1h-7zM32 438h5v1h-5zM654 438h5v1h-5zM342 438h7v1h-7zM32 450h3v1h-3zM656 450h3v1h-3zM342 450h7v1h-7zM32 462h3v1h-3zM656 462h3v1h-3zM342 462h7v1h-7zM32 474h3v1h-3zM656 474h3v1h-3zM342 474h7v1h-7zM32 486h3v1h-3zM656 486h3v1h-3zM342 486h7v1h-7zM32 498h5v1h-5zM654 498h5v1h-5zM342 498h7v1h-7zM32 510h3v1h-3zM656 510h3v1h-3zM342 510h7v1h-7zM32 522h3v1h-3zM656 522h3v1h-3zM342 522h7v1h-7zM32 534h3v1h-3zM656 534h3v1h-3zM342 534h7v1h-7zM32 546h3v1h-3zM656 546h3v1h-3zM342 546h7v1h-7zM32 558h5v1h-5zM654 558h5v1h-5zM342 558h7v1h-7zM32 570h3v1h-3zM656 570h3v1h-3zM342 570h7v1h-7zM32 582h3v1h-3zM656 582h3v1h-3zM342 582h7v1h-7zM32 594h3v1h-3zM656 594h3v1h-3zM342 594h7v1h-7zM32 606h3v1h-3zM656 606h3v1h-3zM342 606h7v1h-7z" fill="#e0e0e0"/><path d="M32 378h627v1h-627zM345 139h1v480h-1z" fill="#e0e0e0"/><path d="M32 194h2v2h-2zM33 195h2v2h-2zM34 196h2v3h-2zM35 198h2v2h-2zM36 199h2v3h-2zM37 201h2v2h-2zM38 202h2v3h-2zM39 204h2v2h-2zM40 205h2v3h-2zM41 207h2v2h-2zM42 208h2v3h-2zM43 210h2v2h-2zM44 211h2v2h-2zM45 212h2v3h-2zM46 214h2v2h-2zM47 215h2v2h-2zM48 216h2v2h-2zM49 217h2v3h-2zM50 219h2v2h-2zM51 220h2v2h-2zM52 221h2v2h-2zM53 221h2v2h-2zM54 222h2v2h-2zM55 223h2v2h-2zM56 224h2v2h-2zM57 224h2v2h-2zM58 225h2v2h-2zM59 226h2v2h-2zM60 226h2v2h-2zM61 226h2v2h-2zM62 227h2v2h-2zM63 227h2v2h-2zM64 227h2v2h-2zM65 227h2v2h-2zM66 227h2v2h-2zM67 227h2v2h-2zM68 227h2v2h-2zM69 226h2v2h-2zM70 226h2v2h-2zM71 226h2v2h-2zM72 225h2v2h-2zM73 225h2v2h-2zM74 224h2v2h-2zM75 223h2v2h-2zM76 223h2v2h-2zM77 222h2v2h-2zM78 221h2v2h-2zM79 220h2v2h-2zM80 219h2v2h-2zM81 218h2v2h-2zM82 217h2v2h-2zM83 216h2v2h-2zM84 214h2v3h-2zM85 213h2v2h-2zM86 212h2v2h-2zM87 211h2v2h-2zM88 209h2v3h-2zM89 208h2v2h-2zM90 206h2v3h-2zM91 205h2v2h-2zM92 203h2v3h-2zM93 202h2v2h-2zM94 200h2v3h-2zM95 199h2v2h-2zM96 197h2v3h-2zM97 196h2v2h-2zM98 194h2v3h-2zM99 193h2v2h-2zM100 191h2v3h-2zM101 190h2v2h-2zM102 188h2v3h-2zM103 187h2v2h-2zM104 185h2v3h-2zM105 184h2v2h-2zM106 183h2v2h-2zM107 181h2v3h-2zM108 180h2v2h-2zM109 179h2v2h-2zM110 178h2v2h-2zM111 176h2v3h-2zM112 175h2v2h-2zM113 174h2v2h-2zM114 173h2v2h-2zM115 172h2v2h-2zM116 171h2v2h-2zM117 171h2v2h-2zM118 170h2v2h-2zM119 169h2v2h-2zM120 168h2v2h-2zM121 168h2v2h-2zM122 167h2v2h-2zM123 167h2v2h-2zM124 167h2v2h-2zM125 166h2v2h-2zM126 166h2v2h-2zM127 166h2v2h-2zM128 166h2v2h-2zM129 166h2v2h-2zM130 166h2v2h-2zM131 166h2v2h-2zM132 167h2v2h-2zM133 167h2v2h-2zM134 167h2v2h-2zM135 168h2v2h-2zM136 168h2v2h-2zM137 169h2v2h-2zM138 170h2v2h-2zM139 171h2v2h-2zM140 171h2v2h-2zM141 172h2v2h-2zM142 173h2v2h-2zM143 174h2v2h-2zM144 175h2v2h-2zM145 176h2v2h-2zM146 177h2v3h-2zM147 179h2v2h-2zM148 180h2v2h-2zM149 181h2v2h-2zM150 182h2v3h-2zM151 184h2v2h-2zM152 185h2v2h-2zM153 186h2v3h-2zM154 188h2v2h-2zM155 189h2v3h-2zM156 191h2v2h-2zM157 192h2v3h-2zM158 194h2v2h-2zM159 195h2v3h-2zM160 197h2v2h-2zM161 198h2v3h-2zM162 200h2v2h-2zM163 201h2v3h-2zM164 203h2v2h-2zM165 204h2v3h-2zM166 206h2v2h-2zM167 207h2v3h-2zM168 209h2v2h-2zM169 210h2v3h-2zM170 212h2v2h-2zM171 213h2v2h-2zM172 214h2v2h-2zM173 215h2v3h-2zM174 217h2v2h-2zM175 218h2v2h-2zM176 219h2v2h-2zM177 220h2v2h-2zM178 221h2v2h-2zM179 222h2v2h-2zM180 223h2v2h-2zM181 223h2v2h-2zM182 224h2v2h-2zM183 225h2v2h-2zM184 225h2v2h-2zM185 226h2v2h-2zM186 226h2v2h-2zM187 226h2v2h-2zM188 227h2v2h-2zM189 227h2v2h-2zM190 227h2v2h-2zM191 227h2v2h-2zM192 227h2v2h-2zM193 227h2v2h-2zM194 227h2v2h-2zM195 226h2v2h-2zM196 226h2v2h-2zM197 226h2v2h-2zM198 225h2v2h-2zM199 224h2v2h-2zM200 224h2v2h-2zM201 223h2v2h-2zM202 222h2v2h-2zM203 221h2v2h-2zM204 221h2v2h-2zM205 220h2v2h-2zM206 219h2v2h-2zM207 218h2v2h-2zM208 216h2v3h-2zM209 215h2v2h-2zM210 214h2v2h-2zM211 213h2v2h-2zM212 211h2v3h-2zM213 210h2v2h-2zM214 209h2v2h-2zM215 207h2v3h-2zM216 206h2v2h-2zM217 204h2v3h-2zM218 203h2v2h-2zM219 201h2v3h-2zM220 200h2v2h-2zM221 198h2v3h-2zM222 197h2v2h-2zM223 195h2v3h-2zM224 194h2v2h-2zM225 192h2v3h-2zM226 191h2v2h-2zM227 189h2v3h-2zM228 188h2v2h-2zM229 186h2v3h-2zM230 185h2v2h-2zM231 184h2v2h-2zM232 182h2v3h-2zM233 181h2v2h-2zM234 180h2v2h-2zM235 178h2v3h-2zM236 177h2v2h-2zM237 176h2v2h-2zM238 175h2v2h-2zM239 174h2v2h-2zM240 173h2v2h-2zM241 172h2v2h-2zM242 171h2v2h-2zM243 170h2v2h-2zM244 169h2v2h-2zM245 169h2v2h-2zM246 168h2v2h-2zM247 168h2v2h-2zM248 167h2v2h-2zM249 167h2v2h-2zM250 166h2v2h-2zM251 166h2v2h-2zM252 166h2v2h-2zM253 166h2v2h-2zM254 166h2v2h-2zM255 166h2v2h-2zM256 166h2v2h-2zM257 166h2v2h-2zM258 167h2v2h-2zM259 167h2v2h-2zM260 168h2v2h-2zM261 168h2v2h-2zM262 169h2v2h-2zM263 169h2v2h-2zM264 170h2v2h-2zM265 171h2v2h-2zM266 172h2v2h-2zM267 173h2v2h-2zM268 174h2v2h-2zM269 175h2v2h-2zM270 176h2v2h-2zM271 177h2v2h-2zM272 178h2v2h-2zM273 179h2v2h-2zM274 180h2v3h-2zM275 182h2v2h-2zM276 183h2v2h-2zM277 184h2v3h-2zM278 186h2v2h-2zM279 187h2v2h-2zM280 188h2v3h-2zM281 190h2v2h-2zM282 191h2v3h-2zM283 193h2v2h-2zM284 194h2v3h-2zM285 196h2v2h-2zM286 197h2v3h-2zM287 199h2v3h-2zM288 201h2v2h-2zM289 202h2v3h-2zM290 204h2v2h-2zM291 205h2v3h-2zM292 207h2v2h-2zM293 208h2v2h-2zM294 209h2v3h-2zM295 211h2v2h-2zM296 212h2v2h-2zM297 213h2v3h-2zM298 215h2v2h-2zM299 216h2v2h-2zM300 217h2v2h-2zM301 218h2v2h-2zM302 219h2v2h-2zM303 220h2v2h-2zM304 221h2v2h-2zM305 222h2v2h-2zM306 223h2v2h-2zM307 224h2v2h-2zM308 224h2v2h-2zM309 225h2v2h-2zM310 225h2v2h-2zM311 226h2v2h-2zM312 226h2v2h-2zM313 227h2v2h-2zM314 227h2v2h-2zM315 227h2v2h-2zM316 227h2v2h-2zM317 227h2v2h-2zM318 227h2v2h-2zM319 227h2v2h-2zM320 227h2v2h-2zM321 226h2v2h-2zM322 226h2v2h-2zM323 225h2v2h-2zM324 225h2v2h-2zM325 224h2v2h-2zM326 224h2v2h-2zM327 223h2v2h-2zM328 222h2v2h-2zM329 221h2v2h-2zM330 220h2v2h-2zM331 219h2v2h-2zM332 218h2v2h-2zM333 217h2v2h-2zM334 216h2v2h-2zM335 215h2v2h-2zM336 213h2v3h-2zM337 212h2v2h-2zM338 211h2v2h-2zM339 209h2v3h-2zM340 208h2v2h-2zM341 207h2v2h-2zM342 205h2v3h-2zM343 204h2v2h-2zM344 202h2v3h-2zM345 201h2v2h-2zM346 199h2v3h-2zM347 198h2v2h-2zM348 196h2v3h-2zM349 195h2v2h-2zM350 193h2v3h-2zM351 192h2v2h-2zM352 190h2v3h-2zM353 189h2v2h-2zM354 187h2v3h-2zM355 186h2v2h-2zM356 184h2v3h-2zM357 183h2v2h-2zM358 182h2v2h-2zM359 180h2v3h-2zM360 179h2v2h-2zM361 178h2v2h-2zM362 177h2v2h-2zM363 175h2v3h-2zM364 174h2v2h-2zM365 173h2v2h-2zM366 172h2v2h-2zM367 172h2v2h-2zM368 171h2v2h-2zM369 170h2v2h-2zM370 169h2v2h-2zM371 169h2v2h-2zM372 168h2v2h-2zM373 167h2v2h-2zM374 167h2v2h-2zM375 167h2v2h-2zM376 166h2v2h-2zM377 166h2v2h-2zM378 166h2v2h-2zM379 166h2v2h-2zM380 166h2v2h-2zM381 166h2v2h-2zM382 166h2v2h-2zM383 167h2v2h-2zM384 167h2v2h-2zM385 167h2v2h-2zM386 168h2v2h-2zM387 168h2v2h-2zM388 169h2v2h-2zM389 170h2v2h-2zM390 170h2v2h-2zM391 171h2v2h-2zM392 172h2v2h-2zM393 173h2v2h-2zM394 174h2v2h-2zM395 175h2v2h-2zM396 176h2v2h-2zM397 177h2v2h-2zM398 178h2v3h-2zM399 180h2v2h-2zM400 181h2v2h-2zM401 182h2v2h-2zM402 183h2v3h-2zM403 185h2v2h-2zM404 186h2v3h-2zM405 188h2v2h-2zM406 189h2v3h-2zM407 191h2v2h-2zM408 192h2v3h-2zM409 194h2v2h-2zM410 195h2v3h-2zM411 197h2v2h-2zM412 198h2v3h-2zM413 200h2v2h-2zM414 201h2v3h-2zM415 203h2v2h-2zM416 204h2v3h-2zM417 206h2v2h-2zM418 207h2v3h-2zM419 209h2v2h-2zM420 210h2v2h-2zM421 211h2v3h-2zM422 213h2v2h-2zM423 214h2v2h-2zM424 215h2v2h-2zM425 216h2v3h-2zM426 218h2v2h-2zM427 219h2v2h-2zM428 220h2v2h-2zM429 221h2v2h-2zM430 222h2v2h-2zM431 222h2v2h-2zM432 223h2v2h-2zM433 224h2v2h-2zM434 225h2v2h-2zM435 225h2v2h-2zM436 226h2v2h-2zM437 226h2v2h-2zM438 226h2v2h-2zM439 227h2v2h-2zM440 227h2v2h-2zM441 227h2v2h-2zM442 227h2v2h-2zM443 227h2v2h-2zM444 227h2v2h-2zM445 227h2v2h-2zM446 226h2v2h-2zM447 226h2v2h-2zM448 226h2v2h-2zM449 225h2v2h-2zM450 225h2v2h-2zM451 224h2v2h-2zM452 223h2v2h-2zM453 222h2v2h-2zM454 222h2v2h-2zM455 221h2v2h-2zM456 220h2v2h-2zM457 219h2v2h-2zM458 218h2v2h-2zM459 217h2v2h-2zM460 215h2v3h-2zM461 214h2v2h-2zM462 213h2v2h-2zM463 212h2v2h-2zM464 210h2v3h-2zM465 209h2v2h-2zM466 208h2v2h-2zM467 206h2v3h-2zM468 205h2v2h-2zM469 203h2v3h-2zM470 202h2v2h-2zM471 200h2v3h-2zM472 199h2v2h-2zM473 197h2v3h-2zM474 196h2v2h-2zM475 194h2v3h-2zM476 193h2v2h-2zM477 191h2v3h-2zM478 190h2v2h-2zM479 188h2v3h-2zM480 187h2v2h-2zM481 185h2v3h-2zM482 184h2v2h-2zM483 182h2v3h-2zM484 181h2v2h-2zM485 180h2v2h-2zM486 179h2v2h-2zM487 177h2v3h-2zM488 176h2v2h-2zM489 175h2v2h-2zM490 174h2v2h-2zM491 173h2v2h-2zM492 172h2v2h-2zM493 171h2v2h-2zM494 170h2v2h-2zM495 170h2v2h-2zM496 169h2v2h-2zM497 168h2v2h-2zM498 168h2v2h-2zM499 167h2v2h-2zM500 167h2v2h-2zM501 167h2v2h-2zM502 166h2v2h-2zM503 166h2v2h-2zM504 166h2v2h-2zM505 166h2v2h-2zM506 166h2v2h-2zM507 166h2v2h-2zM508 166h2v2h-2zM509 167h2v2h-2zM510 167h2v2h-2zM511 167h2v2h-2zM512 168h2v2h-2zM513 169h2v2h-2zM514 169h2v2h-2zM515 170h2v2h-2zM516 171h2v2h-2zM517 172h2v2h-2zM518 172h2v2h-2zM519 173h2v2h-2zM520 174h2v2h-2zM521 175h2v2h-2zM522 176h2v3h-2zM523 178h2v2h-2zM524 179h2v2h-2zM525 180h2v2h-2zM526 181h2v3h-2zM527 183h2v2h-2zM528 184h2v2h-2zM529 185h2v3h-2zM530 187h2v2h-2zM531 188h2v3h-2zM532 190h2v2h-2zM533 191h2v3h-2zM534 193h2v2h-2zM535 194h2v3h-2zM536 196h2v2h-2zM537 197h2v3h-2zM538 199h2v2h-2zM539 200h2v3h-2zM540 202h2v2h-2zM541 203h2v3h-2zM542 205h2v2h-2zM543 206h2v3h-2zM544 208h2v2h-2zM545 209h2v2h-2zM546 210h2v3h-2zM547 212h2v2h-2zM548 213h2v2h-2zM549 214h2v3h-2zM550 216h2v2h-2zM551 217h2v2h-2zM552 218h2v2h-2zM553 219h2v2h-2zM554 220h2v2h-2zM555 221h2v2h-2zM556 222h2v2h-2zM557 223h2v2h-2zM558 224h2v2h-2zM559 224h2v2h-2zM560 225h2v2h-2zM561 225h2v2h-2zM562 226h2v2h-2zM563 226h2v2h-2zM564 227h2v2h-2zM565 227h2v2h-2zM566 227h2v2h-2zM567 227h2v2h-2zM568 227h2v2h-2zM569 227h2v2h-2zM570 227h2v2h-2zM571 227h2v2h-2zM572 226h2v2h-2zM573 226h2v2h-2zM574 225h2v2h-2zM575 225h2v2h-2zM576 224h2v2h-2zM577 224h2v2h-2zM578 223h2v2h-2zM579 222h2v2h-2zM580 221h2v2h-2zM581 220h2v2h-2zM582 219h2v2h-2zM583 218h2v2h-2zM584 217h2v2h-2zM585 216h2v2h-2zM586 215h2v2h-2zM587 214h2v2h-2zM588 212h2v3h-2zM589 211h2v2h-2zM590 210h2v2h-2zM591 208h2v3h-2zM592 207h2v2h-2zM593 206h2v2h-2zM594 204h2v3h-2zM595 203h2v2h-2zM596 201h2v3h-2zM597 200h2v2h-2zM598 198h2v3h-2zM599 196h2v3h-2zM600 195h2v2h-2zM601 193h2v3h-2zM602 192h2v2h-2zM603 190h2v3h-2zM604 189h2v2h-2zM605 187h2v3h-2zM606 186h2v2h-2zM607 185h2v2h-2zM608 183h2v3h-2zM609 182h2v2h-2zM610 181h2v2h-2zM611 179h2v3h-2zM612 178h2v2h-2zM613 177h2v2h-2zM614 176h2v2h-2zM615 175h2v2h-2zM616 174h2v2h-2zM617 173h2v2h-2zM618 172h2v2h-2zM619 171h2v2h-2zM620 170h2v2h-2zM621 169h2v2h-2zM622 169h2v2h-2zM623 168h2v2h-2zM624 168h2v2h-2zM625 167h2v2h-2zM626 167h2v2h-2zM627 166h2v2h-2zM628 166h2v2h-2zM629 166h2v2h-2zM630 166h2v2h-2zM631 166h2v2h-2zM632 166h2v2h-2zM633 166h2v2h-2zM634 166h2v2h-2zM635 167h2v2h-2zM636 167h2v2h-2zM637 168h2v2h-2zM638 168h2v2h-2zM639 169h2v2h-2zM640 169h2v2h-2zM641 170h2v2h-2zM642 171h2v2h-2zM643 172h2v2h-2zM644 173h2v2h-2zM645 174h2v2h-2zM646 175h2v2h-2zM647 176h2v2h-2zM648 177h2v2h-2zM649 178h2v2h-2zM650 179h2v3h-2zM651 181h2v2h-2zM652 182h2v2h-2zM653 183h2v3h-2zM654 185h2v2h-2zM655 186h2v2h-2zM656 187h2v3h-2zM657 189h2v2h-2z" fill="#fcf858" shape-rendering="crispEdges"/><path d="M32 289h1v2h-1zM33 288h1v2h-1zM34 287h1v2h-1zM35 288h1v2h-1zM36 289h1v2h-1zM37 290h1v2h-1zM38 291h1v2h-1zM39 292h1v2h-1zM40 293h1v2h-1zM41 294h1v2h-1zM42 295h1v2h-1zM43 296h1v2h-1zM44 297h1v2h-1zM45 298h1v2h-1zM46 299h1v2h-1zM47 300h1v2h-1zM48 301h1v2h-1zM49 302h1v2h-1zM50 303h1v2h-1zM51 304h1v2h-1zM52 305h1v2h-1zM53 306h1v2h-1zM54 307h1v2h-1zM55 307h1v2h-1zM56 308h1v2h-1zM57 309h1v2h-1zM58 310h1v2h-1zM59 311h1v2h-1zM60 312h1v2h-1zM61 313h1v2h-1zM62 314h1v2h-1zM63 315h1v2h-1zM64 316h1v2h-1zM65 317h1v2h-1zM66 318h1v2h-1zM67 319h1v2h-1zM68 320h1v2h-1zM69 321h1v2h-1zM70 322h1v2h-1zM71 323h1v2h-1zM72 324h1v2h-1zM73 325h1v2h-1zM74 326h1v2h-1zM75 327h1v2h-1zM76 328h1v2h-1zM77 329h1v2h-1zM78 330h1v2h-1zM79 331h1v2h-1zM80 332h1v2h-1zM81 333h1v2h-1zM82 334h1v2h-1zM83 335h1v2h-1zM84 336h1v2h-1zM85 337h1v2h-1zM86 338h1v2h-1zM87 339h1v2h-1zM88 340h1v2h-1zM89 341h1v2h-1zM90 341h1v2h-1zM91 342h1v2h-1zM92 343h1v2h-1zM93 344h1v2h-1zM94 345h1v2h-1zM95 346h1v2h-1zM96 347h1v2h-1zM97 348h1v2h-1zM98 347h1v2h-1zM99 346h1v2h-1zM100 345h1v2h-1zM101 344h1v2h-1zM102 343h1v2h-1zM103 342h1v2h-1zM104 341h1v2h-1zM105 340h1v2h-1zM106 339h1v2h-1zM107 338h1v2h-1zM108 337h1v2h-1zM109 336h1v2h-1zM110 335h1v2h-1zM111 334h1v2h-1zM112 333h1v2h-1zM113 332h1v2h-1zM114 331h1v2h-1zM115 330h1v2h-1zM116 329h1v2h-1zM117 328h1v2h-1zM118 327h1v2h-1zM119 326h1v2h-1zM120 325h1v2h-1zM121 324h1v2h-1zM122 323h1v2h-1zM123 322h1v2h-1zM124 321h1v2h-1zM125 321h1v2h-1zM126 320h1v2h-1zM127 319h1v2h-1zM128 318h1v2h-1zM129 317h1v2h-1zM130 316h1v2h-1zM131 315h1v2h-1zM132 314h1v2h-1zM133 313h1v2h-1zM134 312h1v2h-1zM135 311h1v2h-1zM136 310h1v2h-1zM137 309h1v2h-1zM138 308h1v2h-1zM139 307h1v2h-1zM140 306h1v2h-1zM141 305h1v2h-1zM142 304h1v2h-1zM143 303h1v2h-1zM144 302h1v2h-1zM145 301h1v2h-1zM146 300h1v2h-1zM147 299h1v2h-1zM148 298h1v2h-1zM149 297h1v2h-1zM150 296h1v2h-1zM151 295h1v2h-1zM152 294h1v2h-1zM153 293h1v2h-1zM154 292h1v2h-1zM155 291h1v2h-1zM156 290h1v2h-1zM157 289h1v2h-1zM158 288h1v2h-1zM159 287h1v2h-1zM160 287h1v2h-1zM161 288h1v2h-1zM162 289h1v2h-1zM163 290h1v2h-1zM164 291h1v2h-1zM165 292h1v2h-1zM166 293h1v2h-1zM167 294h1v2h-1zM168 295h1v2h-1zM169 296h1v2h-1zM170 297h1v2h-1zM171 298h1v2h-1zM172 299h1v2h-1zM173 300h1v2h-1zM174 301h1v2h-1zM175 302h1v2h-1zM176 303h1v2h-1zM177 304h1v2h-1zM178 305h1v2h-1zM179 306h1v2h-1zM180 307h1v2h-1zM181 308h1v2h-1zM182 309h1v2h-1zM183 310h1v2h-1zM184 311h1v2h-1zM185 312h1v2h-1zM186 313h1v2h-1zM187 314h1v2h-1zM188 315h1v2h-1zM189 316h1v2h-1zM190 317h1v2h-1zM191 318h1v2h-1zM192 319h1v2h-1zM193 320h1v2h-1zM194 321h1v2h-1zM195 321h1v2h-1zM196 322h1v2h-1zM197 323h1v2h-1zM198 324h1v2h-1zM199 325h1v2h-1zM200 326h1v2h-1zM201 327h1v2h-1zM202 328h1v2h-1zM203 329h1v2h-1zM204 330h1v2h-1zM205 331h1v2h-1zM206 332h1v2h-1zM207 333h1v2h-1zM208 334h1v2h-1zM209 335h1v2h-1zM210 336h1v2h-1zM211 337h1v2h-1zM212 338h1v2h-1zM213 339h1v2h-1zM214 340h1v2h-1zM215 341h1v2h-1zM216 342h1v2h-1zM217 343h1v2h-1zM218 344h1v2h-1zM219 345h1v2h-1zM220 346h1v2h-1zM221 347h1v2h-1zM222 348h1v2h-1zM223 347h1v2h-1zM224 346h1v2h-1zM225 345h1v2h-1zM226 344h1v2h-1zM227 343h1v2h-1zM228 342h1v2h-1zM229 341h1v2h-1zM230 341h1v2h-1zM231 340h1v2h-1zM232 339h1v2h-1zM233 338h1v2h-1zM234 337h1v2h-1zM235 336h1v2h-1zM236 335h1v2h-1zM237 334h1v2h-1zM238 333h1v2h-1zM239 332h1v2h-1zM240 331h1v2h-1zM241 330h1v2h-1zM242 329h1v2h-1zM243 328h1v2h-1zM244 327h1v2h-1zM245 326h1v2h-1zM246 325h1v2h-1zM247 324h1v2h-1zM248 323h1v2h-1zM249 322h1v2h-1zM250 321h1v2h-1zM251 320h1v2h-1zM252 319h1v2h-1zM253 318h1v2h-1zM254 317h1v2h-1zM255 316h1v2h-1zM256 315h1v2h-1zM257 314h1v2h-1zM258 313h1v2h-1zM259 312h1v2h-1zM260 311h1v2h-1zM261 310h1v2h-1zM262 309h1v2h-1zM263 308h1v2h-1zM264 307h1v2h-1zM265 307h1v2h-1zM266 306h1v2h-1zM267 305h1v2h-1zM268 304h1v2h-1zM269 303h1v2h-1zM270 302h1v2h-1zM271 301h1v2h-1zM272 300h1v2h-1zM273 299h1v2h-1zM274 298h1v2h-1zM275 297h1v2h-1zM276 296h1v2h-1zM277 295h1v2h-1zM278 294h1v2h-1zM279 293h1v2h-1zM280 292h1v2h-1zM281 291h1v2h-1zM282 290h1v2h-1zM283 289h1v2h-1zM284 288h1v2h-1zM285 287h1v2h-1zM286 288h1v2h-1zM287 289h1v2h-1zM288 290h1v2h-1zM289 291h1v2h-1zM290 292h1v2h-1zM291 293h1v2h-1zM292 294h1v2h-1zM293 295h1v2h-1zM294 296h1v2h-1zM295 297h1v2h-1zM296 298h1v2h-1zM297 299h1v2h-1zM298 300h1v2h-1zM299 301h1v2h-1zM300 301h1v2h-1zM301 302h1v2h-1zM302 303h1v2h-1zM303 304h1v2h-1zM304 305h1v2h-1zM305 306h1v2h-1zM306 307h1v2h-1zM307 308h1v2h-1zM308 309h1v2h-1zM309 310h1v2h-1zM310 311h1v2h-1zM311 312h1v2h-1zM312 313h1v2h-1zM313 314h1v2h-1zM314 315h1v2h-1zM315 316h1v2h-1zM316 317h1v2h-1zM317 318h1v2h-1zM318 319h1v2h-1zM319 320h1v2h-1zM320 321h1v2h-1zM321 322h1v2h-1zM322 323h1v2h-1zM323 324h1v2h-1zM324 325h1v2h-1zM325 326h1v2h-1zM326 327h1v2h-1zM327 328h1v2h-1zM328 329h1v2h-1zM329 330h1v2h-1zM330 331h1v2h-1zM331 332h1v2h-1zM332 333h1v2h-1zM333 334h1v2h-1zM334 334h1v2h-1zM335 335h1v2h-1zM336 336h1v2h-1zM337 337h1v2h-1zM338 338h1v2h-1zM339 339h1v2h-1zM340 340h1v2h-1zM341 341h1v2h-1zM342 342h1v2h-1zM343 343h1v2h-1zM344 344h1v2h-1zM345 345h1v2h-1zM346 346h1v2h-1zM347 347h1v2h-1zM348 348h1v2h-1zM349 347h1v2h-1zM350 346h1v2h-1zM351 345h1v2h-1zM352 344h1v2h-1zM353 343h1v2h-1zM354 342h1v2h-1zM355 341h1v2h-1zM356 340h1v2h-1zM357 339h1v2h-1zM358 338h1v2h-1zM359 337h1v2h-1zM360 336h1v2h-1zM361 335h1v2h-1zM362 334h1v2h-1zM363 333h1v2h-1zM364 332h1v2h-1zM365 331h1v2h-1zM366 330h1v2h-1zM367 329h1v2h-1zM368 328h1v2h-1zM369 328h1v2h-1zM370 327h1v2h-1zM371 326h1v2h-1zM372 325h1v2h-1zM373 324h1v2h-1zM374 323h1v2h-1zM375 322h1v2h-1zM376 321h1v2h-1zM377 320h1v2h-1zM378 319h1v2h-1zM379 318h1v2h-1zM380 317h1v2h-1zM381 316h1v2h-1zM382 315h1v2h-1zM383 314h1v2h-1zM384 313h1v2h-1zM385 312h1v2h-1zM386 311h1v2h-1zM387 310h1v2h-1zM388 309h1v2h-1zM389 308h1v2h-1zM390 307h1v2h-1zM391 306h1v2h-1zM392 305h1v2h-1zM393 304h1v2h-1zM394 303h1v2h-1zM395 302h1v2h-1zM396 301h1v2h-1zM397 300h1v2h-1zM398 299h1v2h-1zM399 298h1v2h-1zM400 297h1v2h-1zM401 296h1v2h-1zM402 295h1v2h-1zM403 294h1v2h-1zM404 294h1v2h-1zM405 293h1v2h-1zM406 292h1v2h-1zM407 291h1v2h-1zM408 290h1v2h-1zM409 289h1v2h-1zM410 288h1v2h-1zM411 287h1v2h-1zM412 288h1v2h-1zM413 289h1v2h-1zM414 290h1v2h-1zM415 291h1v2h-1zM416 292h1v2h-1zM417 293h1v2h-1zM418 294h1v2h-1zM419 295h1v2h-1zM420 296h1v2h-1zM421 297h1v2h-1zM422 298h1v2h-1zM423 299h1v2h-1zM424 300h1v2h-1zM425 301h1v2h-1zM426 302h1v2h-1zM427 303h1v2h-1zM428 304h1v2h-1zM429 305h1v2h-1zM430 306h1v2h-1zM431 307h1v2h-1zM432 308h1v2h-1zM433 309h1v2h-1zM434 310h1v2h-1zM435 311h1v2h-1zM436 312h1v2h-1zM437 313h1v2h-1zM438 314h1v2h-1zM439 314h1v2h-1zM440 315h1v2h-1zM441 316h1v2h-1zM442 317h1v2h-1zM443 318h1v2h-1zM444 319h1v2h-1zM445 320h1v2h-1zM446 321h1v2h-1zM447 322h1v2h-1zM448 323h1v2h-1zM449 324h1v2h-1zM450 325h1v2h-1zM451 326h1v2h-1zM452 327h1v2h-1zM453 328h1v2h-1zM454 329h1v2h-1zM455 330h1v2h-1zM456 331h1v2h-1zM457 332h1v2h-1zM458 333h1v2h-1zM459 334h1v2h-1zM460 335h1v2h-1zM461 336h1v2h-1zM462 337h1v2h-1zM463 338h1v2h-1zM464 339h1v2h-1zM465 340h1v2h-1zM466 341h1v2h-1zM467 342h1v2h-1zM468 343h1v2h-1zM469 344h1v2h-1zM470 345h1v2h-1zM471 346h1v2h-1zM472 347h1v2h-1zM473 348h1v2h-1zM474 348h1v2h-1zM475 347h1v2h-1zM476 346h1v2h-1zM477 345h1v2h-1zM478 344h1v2h-1zM479 343h1v2h-1zM480 342h1v2h-1zM481 341h1v2h-1zM482 340h1v2h-1zM483 339h1v2h-1zM484 338h1v2h-1zM485 337h1v2h-1zM486 336h1v2h-1zM487 335h1v2h-1zM488 334h1v2h-1zM489 333h1v2h-1zM490 332h1v2h-1zM491 331h1v2h-1zM492 330h1v2h-1zM493 329h1v2h-1zM494 328h1v2h-1zM495 327h1v2h-1zM496 326h1v2h-1zM497 325h1v2h-1zM498 324h1v2h-1zM499 323h1v2h-1zM500 322h1v2h-1zM501 321h1v2h-1zM502 320h1v2h-1zM503 319h1v2h-1zM504 318h1v2h-1zM505 317h1v2h-1zM506 316h1v2h-1zM507 315h1v2h-1zM508 314h1v2h-1zM509 314h1v2h-1zM510 313h1v2h-1zM511 312h1v2h-1zM512 311h1v2h-1zM513 310h1v2h-1zM514 309h1v2h-1zM515 308h1v2h-1zM516 307h1v2h-1zM517 306h1v2h-1zM518 305h1v2h-1zM519 304h1v2h-1zM520 303h1v2h-1zM521 302h1v2h-1zM522 301h1v2h-1zM523 300h1v2h-1zM524 299h1v2h-1zM525 298h1v2h-1zM526 297h1v2h-1zM527 296h1v2h-1zM528 295h1v2h-1zM529 294h1v2h-1zM530 293h1v2h-1zM531 292h1v2h-1zM532 291h1v2h-1zM533 290h1v2h-1zM534 289h1v2h-1zM535 288h1v2h-1zM536 287h1v2h-1zM537 288h1v2h-1zM538 289h1v2h-1zM539 290h1v2h-1zM540 291h1v2h-1zM541 292h1v2h-1zM542 293h1v2h-1zM543 294h1v2h-1zM544 294h1v2h-1zM545 295h1v2h-1zM546 296h1v2h-1zM547 297h1v2h-1zM548 298h1v2h-1zM549 299h1v2h-1zM550 300h1v2h-1zM551 301h1v2h-1zM552 302h1v2h-1zM553 303h1v2h-1zM554 304h1v2h-1zM555 305h1v2h-1zM556 306h1v2h-1zM557 307h1v2h-1zM558 308h1v2h-1zM559 309h1v2h-1zM560 310h1v2h-1zM561 311h1v2h-1zM562 312h1v2h-1zM563 313h1v2h-1zM564 314h1v2h-1zM565 315h1v2h-1zM566 316h1v2h-1zM567 317h1v2h-1zM568 318h1v2h-1zM569 319h1v2h-1zM570 320h1v2h-1zM571 321h1v2h-1zM572 322h1v2h-1zM573 323h1v2h-1zM574 324h1v2h-1zM575 325h1v2h-1zM576 326h1v2h-1zM577 327h1v2h-1zM578 328h1v2h-1zM579 328h1v2h-1zM580 329h1v2h-1zM581 330h1v2h-1zM582 331h1v2h-1zM583 332h1v2h-1zM584 333h1v2h-1zM585 334h1v2h-1zM586 335h1v2h-1zM587 336h1v2h-1zM588 337h1v2h-1zM589 338h1v2h-1zM590 339h1v2h-1zM591 340h1v2h-1zM592 341h1v2h-1zM593 342h1v2h-1zM594 343h1v2h-1zM595 344h1v2h-1zM596 345h1v2h-1zM597 346h1v2h-1zM598 347h1v2h-1zM599 348h1v2h-1zM600 347h1v2h-1zM601 346h1v2h-1zM602 345h1v2h-1zM603 344h1v2h-1zM604 343h1v2h-1zM605 342h1v2h-1zM606 341h1v2h-1zM607 340h1v2h-1zM608 339h1v2h-1zM609 338h1v2h-1zM610 337h1v2h-1zM611 336h1v2h-1zM612 335h1v2h-1zM613 334h1v2h-1zM614 334h1v2h-1zM615 333h1v2h-1zM616 332h1v2h-1zM617 331h1v2h-1zM618 330h1v2h-1zM619 329h1v2h-1zM620 328h1v2h-1zM621 327h1v2h-1zM622 326h1v2h-1zM623 325h1v2h-1zM624 324h1v2h-1zM625 323h1v2h-1zM626 322h1v2h-1zM627 321h1v2h-1zM628 320h1v2h-1zM629 319h1v2h-1zM630 318h1v2h-1zM631 317h1v2h-1zM632 316h1v2h-1zM633 315h1v2h-1zM634 314h1v2h-1zM635 313h1v2h-1zM636 312h1v2h-1zM637 311h1v2h-1zM638 310h1v2h-1zM639 309h1v2h-1zM640 308h1v2h-1zM641 307h1v2h-1zM642 306h1v2h-1zM643 305h1v2h-1zM644 304h1v2h-1zM645 303h1v2h-1zM646 302h1v2h-1zM647 301h1v2h-1zM648 301h1v2h-1zM649 300h1v2h-1zM650 299h1v2h-1zM651 298h1v2h-1zM652 297h1v2h-1zM653 296h1v2h-1zM654 295h1v2h-1zM655 294h1v2h-1zM656 293h1v2h-1zM657 292h1v2h-1zM658 291h1v2h-1z" fill="#a8f4f4" shape-rendering="crispEdges"/><path d="M32 412h33v2h-33zM38 411h1v1h-1zM42 411h1v1h-1zM49 411h3v1h-1zM49 411h3v1h-1zM59 411h1v1h-1zM65 469h63v2h-63zM73 468h3v1h-1zM68 468h3v1h-1zM94 468h1v1h-1zM111 468h3v1h-1zM84 468h1v1h-1zM104 468h1v1h-1zM124 468h2v1h-1zM68 468h1v1h-1zM68 468h1v1h-1zM123 468h3v1h-1zM128 412h63v2h-63zM173 411h1v1h-1zM157 411h1v1h-1zM163 411h1v1h-1zM178 411h3v1h-1zM161 411h1v1h-1zM152 411h1v1h-1zM173 411h1v1h-1zM178 411h3v1h-1zM148 411h1v1h-1zM156 411h1v1h-1zM191 469h63v2h-63zM204 468h2v1h-1zM200 468h2v1h-1zM250 468h3v1h-1zM225 468h1v1h-1zM212 468h2v1h-1zM230 468h3v1h-1zM247 468h3v1h-1zM230 468h1v1h-1zM223 468h1v1h-1zM240 468h3v1h-1zM254 412h63v2h-63zM282 411h1v1h-1zM279 411h2v1h-1zM261 411h3v1h-1zM298 411h1v1h-1zM305 411h1v1h-1zM289 411h3v1h-1zM279 411h3v1h-1zM302 411h1v1h-1zM286 411h1v1h-1zM275 411h3v1h-1zM317 469h63v2h-63zM360 468h1v1h-1zM329 468h1v1h-1zM319 468h1v1h-1zM353 468h1v1h-1zM344 468h2v1h-1zM373 468h2v1h-1zM348 468h2v1h-1zM361 468h1v1h-1zM343 468h1v1h-1zM352 468h1v1h-1zM380 412h63v2h-63zM409 411h1v1h-1zM412 411h2v1h-1zM418 411h1v1h-1zM414 411h3v1h-1zM413 411h2v1h-1zM408 411h2v1h-1zM382 411h2v1h-1zM411 411h1v1h-1zM433 411h1v1h-1zM422 411h1v1h-1zM443 469h63v2h-63zM480 468h1v1h-1zM500 468h1v1h-1zM496 468h2v1h-1zM447 468h1v1h-1zM450 468h1v1h-1zM473 468h1v1h-1zM493 468h2v1h-1zM460 468h2v1h-1zM452 468h1v1h-1zM467 468h2v1h-1zM506 412h63v2h-63zM512 411h1v1h-1zM518 411h2v1h-1zM541 411h1v1h-1zM550 411h2v1h-1zM549 411h2v1h-1zM537 411h2v1h-1zM539 411h3v1h-1zM515 411h1v1h-1zM527 411h3v1h-1zM529 411h3v1h-1zM569 469h63v2h-63zM621 468h1v1h-1zM587 468h1v1h-1zM587 468h1v1h-1zM609 468h3v1h-1zM623 468h1v1h-1zM585 468h1v1h-1zM596 468h1v1h-1zM573 468h1v1h-1zM599 468h3v1h-1zM605 468h1v1h-1zM632 412h27v2h-27zM654 411h3v1h-1zM641 411h1v1h-1zM646 411h2v1h-1zM655 411h3v1h-1zM65 412h1v59h-1zM128 412h1v59h-1zM191 412h1v59h-1zM254 412h1v59h-1zM317 412h1v59h-1zM380 412h1v59h-1zM443 412h1v59h-1zM506 412h1v59h-1zM569 412h1v59h-1zM632 412h1v59h-1z" fill="#d444ec" shape-rendering="crispEdges"/><path d="M32 527h21v3h-21zM35 526h1v1h-1zM36 526h2v1h-1zM39 526h2v1h-1zM53 587h63v3h-63zM71 586h1v1h-1zM93 586h1v1h-1zM92 586h1v1h-1zM82 586h3v1h-1zM106 586h2v1h-1zM89 586h3v1h-1zM87 586h2v1h-1zM112 586h1v1h-1zM110 586h1v1h-1zM78 586h3v1h-1zM116 527h63v3h-63zM138 526h3v1h-1zM145 526h1v1h-1zM153 526h1v1h-1zM133 526h1v1h-1zM119 526h1v1h-1zM138 526h1v1h-1zM126 526h2v1h-1zM150 526h1v1h-1zM175 526h3v1h-1zM168 526h3v1h-1zM179 587h63v3h-63zM228 586h2v1h-1zM231 586h2v1h-1zM204 586h3v1h-1zM191 586h3v1h-1zM226 586h3v1h-1zM222 586h1v1h-1zM212 586h2v1h-1zM212 586h2v1h-1zM223 586h3v1h-1zM238 586h3v1h-1zM242 527h63v3h-63zM266 526h3v1h-1zM275 526h1v1h-1zM264 526h1v1h-1zM300 526h2v1h-1zM293 526h3v1h-1zM263 526h2v1h-1zM295 526h3v1h-1zM263 526h1v1h-1zM275 526h2v1h-1zM287 526h1v1h-1zM305 587h63v3h-63zM357 586h2v1h-1zM353 586h1v1h-1zM365 586h1v1h-1zM354 586h1v1h-1zM310 586h1v1h-1zM324 586h1v1h-1zM350 586h1v1h-1zM355 586h1v1h-1zM361 586h2v1h-1zM322 586h1v1h-1zM368 527h63v3h-63zM426 526h1v1h-1zM397 526h1v1h-1zM373 526h2v1h-1zM393 526h1v1h-1zM385 526h1v1h-1zM375 526h1v1h-1zM374 526h1v1h-1zM372 526h1v1h-1zM393 526h2v1h-1zM378 526h1v1h-1zM431 587h63v3h-63zM480 586h1v1h-1zM466 586h1v1h-1zM457 586h1v1h-1zM483 586h1v1h-1zM442 586h1v1h-1zM433 586h2v1h-1zM472 586h1v1h-1zM451 586h2v1h-1zM464 586h1v1h-1zM452 586h3v1h-1zM494 527h63v3h-63zM531 526h1v1h-1zM553 526h2v1h-1zM544 526h3v1h-1zM551 526h1v1h-1zM526 526h1v1h-1zM501 526h2v1h-1zM549 526h1v1h-1zM497 526h3v1h-1zM546 526h1v1h-1zM529 526h3v1h-1zM557 587h63v3h-63zM590 586h2v1h-1zM568 586h2v1h-1zM575 586h2v1h-1zM597 586h3v1h-1zM600 586h1v1h-1zM603 586h1v1h-1zM601 586h1v1h-1zM575 586h1v1h-1zM567 586h1v1h-1zM569 586h1v1h-1zM620 527h39v3h-39zM651 526h1v1h-1zM654 526h1v1h-1zM637 526h1v1h-1zM650 526h1v1h-1zM638 526h1v1h-1zM636 526h2v1h-1zM53 527h1v63h-1zM116 527h1v63h-1zM179 527h1v63h-1zM242 527h1v63h-1zM305 527h1v63h-1zM368 527h1v63h-1zM431 527h1v63h-1zM494 527h1v63h-1zM557 527h1v63h-1zM620 527h1v63h-1z" fill="#b4f064" shape-rendering="crispEdges"/><path d="M12 191H24L29 196.5L24 202H12Z" fill="#f4f22c"/><path d="M16.7 195L18.7 193.3V200" stroke="#111" stroke-width="1.25" fill="none"/><path d="M12 314H24L29 319.5L24 325H12Z" fill="#a8f4f4"/><path d="M16.5 318C16.5 315.7 21.2 315.7 21.2 318C21.2 319.5 16.7 320.8 16.5 322.6H21.7" stroke="#0a2a2a" stroke-width="1.25" fill="none"/><path d="M12 434H24L29 439.5L24 445H12Z" fill="#e216f2"/><path d="M16.5 437.6C16.8 435.6 21.0 435.6 21.0 437.6C21.0 439 19.4 439.3 18.4 439.3C19.7 439.3 21.299999999999997 439.6 21.299999999999997 441C21.299999999999997 443.5 16.599999999999998 443.5 16.4 441.2" stroke="#4a0a5a" stroke-width="1.25" fill="none"/><path d="M12 553H24L29 558.5L24 564H12Z" fill="#a6f046"/><path d="M20.2 562V555.2L16.0 559.9H22.0" stroke="#111" stroke-width="1.25" fill="none"/><path d="M679 193H667L662 198.5L667 204H679Z" fill="#f4f22c"/><path d="M669.5 195.8H676.5M673 195.8V202.5" stroke="#111" stroke-width="1.3" fill="none"/><path d="M340 122H351V131L345.5 136.5L340 131Z" fill="#f0a034"/><path d="M342.8 124.8H348.3M345.5 124.8V130" stroke="#1a1a1a" stroke-width="1.3"/></svg>
<!-- channel label boxes -->
<div class="a" style="left:31px;top:624px;width:92px;height:19px;background:#000"></div><div class="t" style="left:33.5px;top:628px;color:#f2f06a">CH1</div><svg class="a" style="left:60px;top:629px" width="11" height="9"><path d="M1 7.5C1 0.5 5 0.5 5 4.5C5 8.5 9.5 8.5 9.5 1" stroke="#f2f06a" stroke-width="1.1" fill="none"/></svg><div class="t" style="left:80.3px;top:628px;color:#f2f06a">2.00V</div>
<div class="a" style="left:141px;top:624px;width:92px;height:19px;background:#000"></div><div class="t" style="left:143.5px;top:628px;color:#b4eef6">CH2</div><svg class="a" style="left:170px;top:629px" width="11" height="9"><path d="M1 7.5C1 0.5 5 0.5 5 4.5C5 8.5 9.5 8.5 9.5 1" stroke="#b4eef6" stroke-width="1.1" fill="none"/></svg><div class="t" style="left:190.1px;top:628px;color:#b4eef6">2.00V</div>
<div class="a" style="left:251px;top:624px;width:92px;height:19px;background:#000"></div><div class="a" style="left:252px;top:626px;width:27px;height:15px;background:#d23cf0"></div><div class="t" style="left:253.7px;top:628px;color:#6a1688">CH3</div><svg class="a" style="left:280px;top:629px" width="11" height="9"><path d="M1 7.5C1 0.5 5 0.5 5 4.5C5 8.5 9.5 8.5 9.5 1" stroke="#c848e8" stroke-width="1.1" fill="none"/></svg><div class="t" style="left:300.4px;top:628px;color:#c848e8">5.00V</div>
<div class="a" style="left:361px;top:624px;width:92px;height:19px;background:#000"></div><div class="t" style="left:363.5px;top:628px;color:#b4f06c">CH4</div><svg class="a" style="left:390px;top:629px" width="11" height="9"><path d="M1 7.5C1 0.5 5 0.5 5 4.5C5 8.5 9.5 8.5 9.5 1" stroke="#b4f06c" stroke-width="1.1" fill="none"/></svg><div class="t" style="left:409.9px;top:628px;color:#b4f06c">2.00V</div>
<div class="a" style="left:569px;top:624px;width:90px;height:19px;background:#000"></div><div class="t" style="left:572px;top:628px;color:#e49a4a">Time: 500.0us</div>
<!-- status bar -->
<div class="a" style="left:8px;top:646px;width:866px;height:21px;background:#f3f3f3;border-top:2px solid #f0f0f0"></div><div class="a" style="left:8px;top:648px;width:866px;height:1px;background:#b0b0b0"></div>
<div class="t" style="left:10px;top:653px;font-size:12.5px;color:#1a1a1a">Connected</div>
<div class="a" style="left:746px;top:650px;width:1px;height:17px;background:#c8c8c8"></div>
<div class="t" style="left:751px;top:653px;font-size:12.5px;color:#1a1a1a">14-03-2017</div><div class="t" style="left:825px;top:653px;font-size:12.5px;color:#1a1a1a">11:44</div><svg class="a" style="left:862px;top:654px" width="12" height="12"><path d="M9 2h2v2h-2zM6 5h2v2h-2zM9 5h2v2h-2zM3 8h2v2h-2zM6 8h2v2h-2zM9 8h2v2h-2z" fill="#c0c4cc"/></svg>
<!-- right panel -->
<div class="a" style="left:680px;top:92px;width:194px;height:555px;background:#f0f0f0"></div>
<div class="a" style="left:680px;top:92px;width:2px;height:555px;background:#f8f8f8"></div>
<div class="lbl" style="left:693px;top:102px">Connect:</div>
<div class="a" style="left:740px;top:97px;width:20px;height:20px;border-radius:50%;background:#a4a4a4;border:1px solid #2a2a2a"></div>
<div class="lbl" style="left:801px;top:102px">DDS:</div>
<div class="a" style="left:828px;top:97px;width:20px;height:20px;border-radius:50%;background:#e01e1e;border:1px solid #2a2a2a"></div>
<!-- tabs -->
<div class="a" style="left:682px;top:140px;width:193px;height:508px;border-left:1px solid #9a9a9a;border-top:1px solid #9a9a9a;background:linear-gradient(#fafafa,#f0f0f0 9px,#f0f0f0)"></div>
<div class="a" style="left:727px;top:121px;width:39px;height:20px;border:1px solid #9a9a9a;border-bottom:none;background:linear-gradient(#f0f0f0,#e2e2e2 50%,#d6d6d6)"></div>
<div class="lbl" style="left:732px;top:127px;font-size:10.3px">DDS</div>
<div class="a" style="left:682px;top:119px;width:46px;height:23px;border:1px solid #9a9a9a;border-bottom:none;background:#fbfbfb"></div>
<div class="lbl" style="left:690px;top:125px;font-size:10.3px">DSO</div>
<!-- scrollbar -->
<div class="a" style="left:860px;top:141px;width:15px;height:507px;background:linear-gradient(90deg,#f0f0f0,#f6f6f6 40%,#ececec);border-left:1px solid #e4e4e4"></div>
<div class="a" style="left:861px;top:142px;width:13px;height:16px;border:1px solid #b0b0b0;border-radius:2px;background:linear-gradient(90deg,#f6f6f6,#dedede)"></div>
<svg class="a" style="left:861px;top:142px" width="13" height="16"><path d="M4 9.5L7 6.3L10 9.5Z" fill="#3a3a3a"/></svg>
<div class="a" style="left:861px;top:159px;width:13px;height:340px;border:1px solid #9a9a9a;border-radius:2px;background:linear-gradient(90deg,#fafafa,#e6e6e6 60%,#d4d4d4)"></div>
<div class="a" style="left:865px;top:325px;width:6px;height:7px;background:repeating-linear-gradient(#3a3a3a 0 1px,transparent 1px 3px)"></div>
<!-- Horizontal group -->
<div class="grp" style="left:689px;top:152px;width:166px;height:111px"></div>
<div class="lbl" style="left:694px;top:147px;background:#f0f0f0;padding:0 3px;color:#18182a">Horizontal</div>
<div class="lbl" style="left:691px;top:168px">Time / DIV</div>
<div class="combo" style="left:691px;top:185px;width:68px;height:22px"><span>500.0us</span><i></i></div>
<div class="lbl" style="left:691px;top:215px">Format</div>
<div class="combo" style="left:691px;top:234px;width:68px;height:22px"><span style="color:#585858">Y - T</span><i></i></div>
<!-- Vertical group -->
<div class="grp" style="left:689px;top:275px;width:166px;height:152px"></div>
<div class="lbl" style="left:694px;top:271px;background:#f0f0f0;padding:0 3px;color:#18182a">Vertical</div>
<div class="combo" style="left:691px;top:293px;width:68px;height:22px"><span>CH3</span><i></i></div>
<div class="a" style="left:764px;top:296px;width:12px;height:12px;border:1px solid #8e8f8f;background:linear-gradient(#e6eaf2,#fafbfd)"></div>
<svg class="a" style="left:764px;top:296px" width="12" height="12"><path d="M2.5 5.5L5 9L9.5 1.5" stroke="#3a4a8a" stroke-width="1.7" fill="none"/></svg>
<div class="lbl" style="left:781px;top:297px;font-size:10.5px">ON/OFF</div>
<div class="a" style="left:691px;top:321px;width:67px;height:21px;border:1px solid #dadada;border-top-color:#c8c8c8;background:#f4f4f4"><span class="t" style="left:3px;top:5px;font-size:11px">5.00V</span></div>
<div class="a" style="left:742px;top:322px;width:15px;height:9px;border:1px solid #c4cad6;background:linear-gradient(#f8f9fb,#e8ebf2)"></div>
<div class="a" style="left:742px;top:331px;width:15px;height:10px;border:1px solid #c4cad6;background:linear-gradient(#f8f9fb,#e8ebf2)"></div>
<svg class="a" style="left:742px;top:322px" width="15" height="19"><path d="M4.5 6L7.5 3L10.5 6Z M4.5 13L7.5 16L10.5 13Z" fill="#5a6a98"/></svg>
<div class="combo" style="left:691px;top:348px;width:68px;height:22px"><span>AC</span><i></i></div>
<div class="combo" style="left:691px;top:377px;width:68px;height:22px"><span>x1</span><i></i></div>
<!-- knobs -->
<svg class="a" style="left:0;top:0" width="882" height="675"><circle cx="806.5" cy="216.5" r="34" fill="#cdcdcd" stroke="#111" stroke-width="1"/><path d="M780.34 242.66A37 37 0 1 1 832.66 242.66" fill="none" stroke="#111" stroke-width="1"/><path d="M782.46 240.54L776.09 246.91M830.54 240.54L836.91 246.91" stroke="#111" stroke-width="1.6"/><path d="M826.30 196.70L830.54 192.46M786.70 236.30L782.46 240.54" stroke="#555" stroke-width="1"/><circle cx="806.5" cy="216.5" r="28" fill="#1c18c8" stroke="#2a2a2a" stroke-width="0.8"/><path d="M808 210.5L814 195" stroke="#f4f0f8" stroke-width="2.2"/></svg>
<svg class="a" style="left:0;top:0" width="882" height="675"><circle cx="806.5" cy="355.5" r="34" fill="#cdcdcd" stroke="#111" stroke-width="1"/><path d="M780.34 381.66A37 37 0 1 1 832.66 381.66" fill="none" stroke="#111" stroke-width="1"/><path d="M782.46 379.54L776.09 385.91M830.54 379.54L836.91 385.91" stroke="#111" stroke-width="1.6"/><path d="M826.30 335.70L830.54 331.46M786.70 375.30L782.46 379.54" stroke="#555" stroke-width="1"/><circle cx="806.5" cy="355.5" r="28" fill="#e012f0" stroke="#2a2a2a" stroke-width="0.8"/><path d="M789 368.5L801 360" stroke="#f4f0f8" stroke-width="2.2"/></svg>
<!-- Trigger group -->
<div class="grp" style="left:689px;top:438px;width:166px;height:203px"></div>
<div class="lbl" style="left:694px;top:434px;background:#f0f0f0;padding:0 3px;color:#18182a">Trigger</div>
<div class="lbl" style="left:691px;top:460px">Trigger Mode</div>
<div class="combo" style="left:778px;top:454px;width:68px;height:22px"><span>Edge</span><i></i></div>
<div class="lbl" style="left:691px;top:490px">Trigger Sweep</div>
<div class="combo" style="left:778px;top:484px;width:68px;height:22px"><span>AUTO</span><i></i></div>
<div class="lbl" style="left:691px;top:520px">Trigger Source</div>
<div class="combo" style="left:778px;top:514px;width:68px;height:22px"><span>CH1</span><i></i></div>
<div class="lbl" style="left:691px;top:549px">Trigger Slope</div>
<div class="combo" style="left:778px;top:544px;width:68px;height:22px"><span>+</span><i></i></div>
</body></html>
